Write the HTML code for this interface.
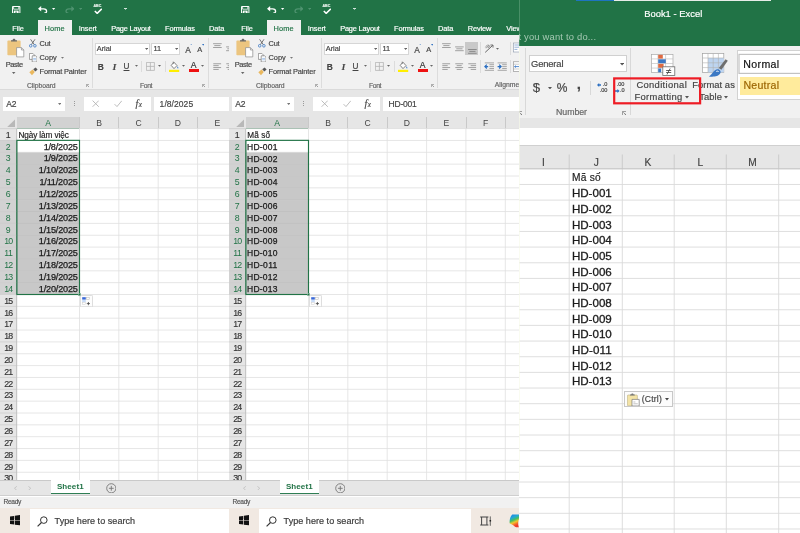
<!DOCTYPE html>
<html lang="vi"><head><meta charset="utf-8"><title>Excel</title>
<style>
html,body{margin:0;padding:0}
body{width:800px;height:533px;position:relative;overflow:hidden;background:#fff;font-family:"Liberation Sans",sans-serif}
.p{position:absolute;top:0;height:533px;overflow:hidden;will-change:transform;opacity:.999}
.r{position:absolute;display:block}
.t{position:absolute;white-space:nowrap;display:block;-webkit-text-stroke:.18px currentColor}
</style></head><body>
<div class="p" style="left:0;width:229px"><div class="r" style="left:0.00px;top:0.00px;width:292.00px;height:35.00px;background:#217346;"></div><div class="r" style="left:0.00px;top:35.00px;width:292.00px;height:54.50px;background:#f1f1f1;"></div><div class="r" style="left:0.00px;top:89.50px;width:292.00px;height:27.30px;background:#e6e6e6;"></div><div class="r" style="left:0.00px;top:89.20px;width:292.00px;height:0.80px;background:#dadada;"></div><svg class="r" style="left:12.20px;top:5.50px;" width="8.4" height="7.8" viewBox="0 0 8.4 7.8"><path d="M.5 .5H7.9V7.3H.5Z" fill="none" stroke="#fff" stroke-width="1"/><path d="M2 .8H6.4V3.4H2Z" fill="#fff" opacity=".0"/><path d="M1.8 4.6H6.6V7.3H1.8Z" fill="#fff"/><rect x="3.4" y="5.6" width="1.3" height="1.2" fill="#217346"/><path d="M1.6 .8V3.2H6.8V.8" fill="none" stroke="#fff" stroke-width=".8"/></svg><svg class="r" style="left:38.00px;top:5.80px;" width="9.6" height="7.6" viewBox="0 0 9.6 7.6"><path d="M1.2 2.8H5.6C7.8 2.8 8.6 4 8.6 5.2C8.6 6.4 7.6 7.2 6.2 7.2" fill="none" stroke="#fff" stroke-width="1.3"/><path d="M0 2.8L3.2 0V5.6Z" fill="#fff"/></svg><svg class="r" style="left:52.38px;top:8.32px;" width="3.23" height="1.95" viewBox="0 0 3.23 1.95"><path d="M0 0H3.23L1.61 1.95Z" fill="#fff"/></svg><svg class="r" style="left:64.60px;top:5.80px;" width="9.6" height="7.6" viewBox="0 0 9.6 7.6"><path d="M8.4 2.8H4C1.8 2.8 1 4 1 5.2C1 6.4 2 7.2 3.4 7.2" fill="none" stroke="#4f9370" stroke-width="1.2"/><path d="M9.6 2.8L6.4 0V5.6Z" fill="#4f9370"/></svg><svg class="r" style="left:78.69px;top:8.32px;" width="3.23" height="1.95" viewBox="0 0 3.23 1.95"><path d="M0 0H3.23L1.61 1.95Z" fill="#4f9370"/></svg><span class="t" style="left:93.50px;top:3.78px;font-size:3.6px;line-height:4.32px;color:#e6f0ea;font-weight:bold;">ABC</span><svg class="r" style="left:93.60px;top:8.00px;" width="8.6" height="6.4" viewBox="0 0 8.6 6.4"><path d="M.8 3L3.2 5.4L7.8 .8" fill="none" stroke="#fff" stroke-width="1.5"/></svg><div class="r" style="left:124.30px;top:7.70px;width:2.40px;height:0.70px;background:#cfe3d8;"></div><svg class="r" style="left:124.51px;top:9.20px;" width="1.98" height="1.2" viewBox="0 0 1.98 1.2"><path d="M0 0H1.98L0.99 1.20Z" fill="#cfe3d8"/></svg><div class="r" style="left:38.00px;top:20.40px;width:33.60px;height:15.00px;background:#f1f1f1;"></div><span class="t" style="left:12.25px;top:24.76px;font-size:7.4px;line-height:8.88px;color:#fff;letter-spacing:-0.106px;">File</span><span class="t" style="left:44.45px;top:24.76px;font-size:7.4px;line-height:8.88px;color:#217346;letter-spacing:0.140px;">Home</span><span class="t" style="left:78.80px;top:24.76px;font-size:7.4px;line-height:8.88px;color:#fff;letter-spacing:-0.085px;">Insert</span><span class="t" style="left:111.20px;top:24.76px;font-size:7.4px;line-height:8.88px;color:#fff;letter-spacing:-0.178px;">Page Layout</span><span class="t" style="left:165.10px;top:24.76px;font-size:7.4px;line-height:8.88px;color:#fff;letter-spacing:-0.130px;">Formulas</span><span class="t" style="left:209.10px;top:24.76px;font-size:7.4px;line-height:8.88px;color:#fff;letter-spacing:-0.108px;">Data</span><span class="t" style="left:238.70px;top:24.76px;font-size:7.4px;line-height:8.88px;color:#fff;letter-spacing:-0.111px;">Review</span><span class="t" style="left:277.25px;top:24.76px;font-size:7.4px;line-height:8.88px;color:#fff;letter-spacing:-0.102px;">View</span><svg class="r" style="left:7.00px;top:38.40px;" width="18" height="19.4" viewBox="0 0 18 19.4"><rect x=".4" y="2.6" width="13.2" height="14.6" rx=".8" fill="#ecc57f"/><path d="M4 3.4V2.2H5.6C5.6 .4 8.4 .4 8.4 2.2H10V3.4Z" fill="#6a6a6a"/><path d="M9.6 9.6H14.4L16.8 12V18.9H9.6Z" fill="#fff" stroke="#8a8a8a" stroke-width=".7"/><path d="M14.4 9.6V12H16.8" fill="none" stroke="#8a8a8a" stroke-width=".7"/></svg><span class="t" style="left:5.70px;top:60.86px;font-size:7.4px;line-height:8.88px;color:#444;letter-spacing:-0.385px;">Paste</span><svg class="r" style="left:12.49px;top:72.37px;" width="3.42" height="2.07" viewBox="0 0 3.42 2.07"><path d="M0 0H3.42L1.71 2.07Z" fill="#666"/></svg><svg class="r" style="left:29.00px;top:39.40px;" width="7.6" height="8.6" viewBox="0 0 7.6 8.6"><path d="M1.6 .3L5.2 5.6M6 .3L2.4 5.6" stroke="#555" stroke-width=".8" fill="none"/><circle cx="1.7" cy="6.8" r="1.3" fill="none" stroke="#3b78c4" stroke-width=".8"/><circle cx="5.9" cy="6.8" r="1.3" fill="none" stroke="#3b78c4" stroke-width=".8"/></svg><span class="t" style="left:39.60px;top:40.06px;font-size:7.4px;line-height:8.88px;color:#444;letter-spacing:-0.305px;">Cut</span><svg class="r" style="left:29.00px;top:52.60px;" width="8.4" height="9.4" viewBox="0 0 8.4 9.4"><path d="M.4 .4H3.8L5.2 1.8V6.4H.4Z" fill="#fff" stroke="#777" stroke-width=".7"/><path d="M3.2 2.8H6.6L8 4.2V9H3.2Z" fill="#fff" stroke="#777" stroke-width=".7"/><path d="M4.2 5.4H7M4.2 6.8H7" stroke="#6ea0dc" stroke-width=".6"/></svg><span class="t" style="left:39.60px;top:53.76px;font-size:7.4px;line-height:8.88px;color:#444;letter-spacing:-0.069px;">Copy</span><svg class="r" style="left:61.08px;top:56.78px;" width="3.04" height="1.84" viewBox="0 0 3.04 1.84"><path d="M0 0H3.04L1.52 1.84Z" fill="#777"/></svg><svg class="r" style="left:29.00px;top:67.00px;" width="9" height="8.6" viewBox="0 0 9 8.6"><path d="M.3 5.2L3.6 2.6L5.8 5L3 8.3Z" fill="#eab85e"/><path d="M4.2 2.2L6.6 .4L8.6 2.6L6.4 4.6Z" fill="#555"/></svg><span class="t" style="left:39.60px;top:68.06px;font-size:7.4px;line-height:8.88px;color:#444;letter-spacing:-0.139px;">Format Painter</span><span class="t" style="left:27.00px;top:81.57px;font-size:6.8px;line-height:8.16px;color:#666;letter-spacing:-0.056px;">Clipboard</span><svg class="r" style="left:85.60px;top:83.60px;" width="3.6" height="3.6" viewBox="0 0 3.6 3.6"><path d="M.4 3.6V.4H3.6" fill="none" stroke="#777" stroke-width="0.6"/><path d="M3.6 3.6H1.62L3.6 1.62Z" fill="#777"/><path d="M1.08 1.08L2.8800000000000003 2.8800000000000003" stroke="#777" stroke-width="0.6"/></svg><div class="r" style="left:92.00px;top:38.00px;width:0.80px;height:50.00px;background:#dcdcdc;"></div><div class="r" style="left:95.20px;top:42.80px;width:55.00px;height:12.00px;background:#fff;box-sizing:border-box;border:1px solid #d6d6d6;"></div><div class="r" style="left:150.80px;top:42.80px;width:29.60px;height:12.00px;background:#fff;box-sizing:border-box;border:1px solid #d6d6d6;"></div><span class="t" style="left:96.80px;top:45.06px;font-size:7.4px;line-height:8.88px;color:#444;letter-spacing:-0.041px;">Arial</span><svg class="r" style="left:145.28px;top:47.92px;" width="3.23" height="1.95" viewBox="0 0 3.23 1.95"><path d="M0 0H3.23L1.61 1.95Z" fill="#666"/></svg><span class="t" style="left:153.60px;top:45.06px;font-size:7.4px;line-height:8.88px;color:#444;letter-spacing:-0.241px;">11</span><svg class="r" style="left:174.78px;top:47.92px;" width="3.23" height="1.95" viewBox="0 0 3.23 1.95"><path d="M0 0H3.23L1.61 1.95Z" fill="#666"/></svg><span class="t" style="left:185.20px;top:44.76px;font-size:8.4px;line-height:10.08px;color:#444;">A</span><svg class="r" style="left:190.40px;top:43.60px;" width="2.4" height="1.8" viewBox="0 0 2.4 1.8"><path d="M0 1.8H2.4L1.2 0Z" fill="#3b78c4"/></svg><span class="t" style="left:197.33px;top:45.66px;font-size:7.4px;line-height:8.88px;color:#444;">A</span><svg class="r" style="left:201.60px;top:44.00px;" width="2.4" height="1.8" viewBox="0 0 2.4 1.8"><path d="M0 0H2.4L1.2 1.8Z" fill="#3b78c4"/></svg><span class="t" style="left:97.87px;top:61.76px;font-size:8.4px;line-height:10.08px;color:#444;font-weight:bold;">B</span><span class="t" style="left:112.68px;top:61.56px;font-size:8.8px;line-height:10.56px;color:#444;font-style:italic;font-family:'Liberation Serif',serif;font-weight:bold;">I</span><span class="t" style="left:123.54px;top:61.66px;font-size:8.2px;line-height:9.84px;color:#444;text-decoration:underline;text-underline-offset:.6px;">U</span><svg class="r" style="left:134.68px;top:65.48px;" width="3.04" height="1.84" viewBox="0 0 3.04 1.84"><path d="M0 0H3.04L1.52 1.84Z" fill="#666"/></svg><div class="r" style="left:141.20px;top:60.60px;width:0.80px;height:11.40px;background:#dcdcdc;"></div><svg class="r" style="left:146.00px;top:62.00px;" width="8.8" height="8.8" viewBox="0 0 8.8 8.8"><path d="M.4 .4H8.4V8.4H.4ZM4.4 .4V8.4M.4 4.4H8.4" fill="none" stroke="#b2b2b2" stroke-width=".8"/></svg><svg class="r" style="left:158.48px;top:65.48px;" width="3.04" height="1.84" viewBox="0 0 3.04 1.84"><path d="M0 0H3.04L1.52 1.84Z" fill="#666"/></svg><div class="r" style="left:165.00px;top:60.60px;width:0.80px;height:11.40px;background:#dcdcdc;"></div><svg class="r" style="left:169.00px;top:60.60px;" width="10.6" height="11" viewBox="0 0 10.6 11"><path d="M2.2 4.4L5 1.2L8 4.6L5 7.6Z" fill="#fff" stroke="#666" stroke-width=".8"/><path d="M4.2 .6V3" stroke="#666" stroke-width=".7"/><path d="M8.6 5.2C9.4 6.4 9.8 7 9 7.6C8.2 7 8 6.2 8.6 5.2Z" fill="#3b78c4"/><rect x="0" y="8.8" width="10.2" height="2.2" fill="#ffee00"/></svg><svg class="r" style="left:182.18px;top:65.48px;" width="3.04" height="1.84" viewBox="0 0 3.04 1.84"><path d="M0 0H3.04L1.52 1.84Z" fill="#666"/></svg><span class="t" style="left:190.83px;top:60.06px;font-size:8.6px;line-height:10.32px;color:#333;">A</span><div class="r" style="left:188.60px;top:69.40px;width:10.20px;height:2.20px;background:#ee1111;"></div><svg class="r" style="left:201.48px;top:65.48px;" width="3.04" height="1.84" viewBox="0 0 3.04 1.84"><path d="M0 0H3.04L1.52 1.84Z" fill="#666"/></svg><span class="t" style="left:140.00px;top:81.57px;font-size:6.8px;line-height:8.16px;color:#666;letter-spacing:-0.402px;">Font</span><svg class="r" style="left:201.80px;top:83.60px;" width="3.6" height="3.6" viewBox="0 0 3.6 3.6"><path d="M.4 3.6V.4H3.6" fill="none" stroke="#777" stroke-width="0.6"/><path d="M3.6 3.6H1.62L3.6 1.62Z" fill="#777"/><path d="M1.08 1.08L2.8800000000000003 2.8800000000000003" stroke="#777" stroke-width="0.6"/></svg><div class="r" style="left:208.40px;top:38.00px;width:0.80px;height:50.00px;background:#dcdcdc;"></div><div class="r" style="left:236.30px;top:42.20px;width:13.10px;height:12.60px;background:#c9c9c9;"></div><svg class="r" style="left:212.00px;top:41.00px;" width="80" height="16" viewBox="0 0 80 16"><path d="M1.10 2.70h8.6 M2.30 4.60h6.2 M1.10 6.50h8.6" stroke="#858585" stroke-width="0.75" fill="none"/><path d="M14.10 5.90h8.6 M15.30 7.80h6.2 M14.10 9.70h8.6" stroke="#858585" stroke-width="0.75" fill="none"/><path d="M27.10 8.50h8.6 M28.30 10.40h6.2 M27.10 12.30h8.6" stroke="#777" stroke-width="0.75" fill="none"/><path d="M44.2 11.4L51.6 4.4" stroke="#555" stroke-width=".9" fill="none"/><path d="M49.4 4H52V6.6" stroke="#555" stroke-width=".8" fill="none"/><path d="M44.6 5.4C45.4 4.2 46.8 5 46 6.2C45.6 7 44.6 7.2 44.4 6.6M47 3.4V6.6M47 5C47.6 4 49 4.4 48.6 5.6C48.2 6.6 47.4 6.6 47 6" stroke="#666" stroke-width=".6" fill="none"/><rect x="72.4" y="2" width="7" height="9" fill="#fff" stroke="#8a97aa" stroke-width=".6"/><path d="M73.4 4H78.4M73.4 6.2H78.4M73.4 8.4H76.4" stroke="#6f94cc" stroke-width=".7"/></svg><svg class="r" style="left:267.08px;top:47.68px;" width="3.04" height="1.84" viewBox="0 0 3.04 1.84"><path d="M0 0H3.04L1.52 1.84Z" fill="#666"/></svg><div class="r" style="left:251.20px;top:42.00px;width:0.80px;height:12.60px;background:#dcdcdc;"></div><div class="r" style="left:251.20px;top:60.40px;width:0.80px;height:12.60px;background:#dcdcdc;"></div><div class="r" style="left:281.40px;top:42.00px;width:0.80px;height:12.60px;background:#dcdcdc;"></div><div class="r" style="left:281.40px;top:60.40px;width:0.80px;height:12.60px;background:#dcdcdc;"></div><svg class="r" style="left:212.00px;top:60.00px;" width="80" height="14" viewBox="0 0 80 14"><path d="M1.30 3.75h7.8 M1.30 5.65h5.4 M1.30 7.55h7.8 M1.30 9.45h5.4" stroke="#858585" stroke-width="0.75" fill="none"/><path d="M14.30 3.75h7.8 M15.70 5.65h5 M14.30 7.55h7.8 M15.70 9.45h5" stroke="#858585" stroke-width="0.75" fill="none"/><path d="M27.30 3.75h7.8 M29.70 5.65h5.4 M27.30 7.55h7.8 M29.70 9.45h5.4" stroke="#858585" stroke-width="0.75" fill="none"/><path d="M43.80 2.9h9.2M43.80 10.3h9.2M48.40 4.7h4.6M48.40 6.6h4.6M48.40 8.5h4.6" stroke="#858585" stroke-width=".7" fill="none"/><path d="M47.20 6.6H44.20M45.80 4.7L43.90 6.6L45.80 8.5" stroke="#2b6fc2" stroke-width="1.2" fill="none"/><path d="M56.60 2.9h9.2M56.60 10.3h9.2M61.20 4.7h4.6M61.20 6.6h4.6M61.20 8.5h4.6" stroke="#858585" stroke-width=".7" fill="none"/><path d="M56.60 6.6H59.80M58.20 4.7L60.10 6.6L58.20 8.5" stroke="#2b6fc2" stroke-width="1.2" fill="none"/><rect x="72.4" y="1.8" width="7" height="9.6" fill="#fff" stroke="#888" stroke-width=".6"/><path d="M72.4 4.2H79.4M72.4 9H79.4" stroke="#999" stroke-width=".5"/><path d="M73.6 6.6H78.4M74.8 5.6L73.6 6.6L74.8 7.6" stroke="#2b6fc2" stroke-width=".8" fill="none"/></svg><span class="t" style="left:265.80px;top:81.17px;font-size:6.8px;line-height:8.16px;color:#666;letter-spacing:-0.027px;">Alignment</span><div class="r" style="left:3.00px;top:96.80px;width:62.30px;height:14.00px;background:#fff;"></div><span class="t" style="left:6.20px;top:99.21px;font-size:8.5px;line-height:10.2px;color:#444;letter-spacing:-0.099px;">A2</span><svg class="r" style="left:57.89px;top:102.97px;" width="3.42" height="2.07" viewBox="0 0 3.42 2.07"><path d="M0 0H3.42L1.71 2.07Z" fill="#777"/></svg><div class="r" style="left:74.40px;top:100.60px;width:0.90px;height:0.90px;background:#9a9a9a;"></div><div class="r" style="left:74.40px;top:102.90px;width:0.90px;height:0.90px;background:#9a9a9a;"></div><div class="r" style="left:74.40px;top:105.20px;width:0.90px;height:0.90px;background:#9a9a9a;"></div><div class="r" style="left:84.40px;top:96.80px;width:66.60px;height:14.00px;background:#fff;"></div><svg class="r" style="left:91.50px;top:100.30px;" width="7.4" height="7.4" viewBox="0 0 7.4 7.4"><path d="M.6 .6L6.8 6.8M6.8 .6L.6 6.8" stroke="#b4b4b4" stroke-width=".9" fill="none"/></svg><svg class="r" style="left:113.50px;top:100.30px;" width="8.4" height="7.4" viewBox="0 0 8.4 7.4"><path d="M.6 4.2L3 6.6L7.8 .8" stroke="#b4b4b4" stroke-width=".9" fill="none"/></svg><span class="t" style="left:135.40px;top:98.15px;font-size:10px;line-height:12.0px;color:#4a4a4a;font-style:italic;font-family:'Liberation Serif',serif;">f</span><span class="t" style="left:138.80px;top:101.26px;font-size:7.2px;line-height:8.64px;color:#4a4a4a;font-style:italic;font-family:'Liberation Serif',serif;">x</span><div class="r" style="left:153.50px;top:96.80px;width:138.50px;height:14.00px;background:#fff;"></div><span class="t" style="left:159.60px;top:99.21px;font-size:8.5px;line-height:10.2px;color:#444;letter-spacing:0.064px;">1/8/2025</span><div class="r" style="left:0.00px;top:116.80px;width:292.00px;height:11.80px;background:#e6e6e6;"></div><div class="r" style="left:16.70px;top:116.80px;width:62.80px;height:11.80px;background:#d2d2d2;"></div><div class="r" style="left:16.70px;top:127.70px;width:63.10px;height:1.20px;background:#217346;"></div><svg class="r" style="left:6.60px;top:119.30px;" width="8.6" height="8.2" viewBox="0 0 8.6 8.2"><path d="M8.6 0V8.2H0Z" fill="#b8b8b8"/></svg><span class="t" style="left:45.23px;top:117.96px;font-size:8.6px;line-height:10.32px;color:#217346;-webkit-text-stroke:0;">A</span><span class="t" style="left:96.28px;top:117.96px;font-size:8.6px;line-height:10.32px;color:#444;-webkit-text-stroke:0;">B</span><div class="r" style="left:79.10px;top:117.40px;width:0.80px;height:11.20px;background:#c9c9c9;"></div><span class="t" style="left:135.39px;top:117.96px;font-size:8.6px;line-height:10.32px;color:#444;-webkit-text-stroke:0;">C</span><div class="r" style="left:118.40px;top:117.40px;width:0.80px;height:11.20px;background:#c9c9c9;"></div><span class="t" style="left:174.79px;top:117.96px;font-size:8.6px;line-height:10.32px;color:#444;-webkit-text-stroke:0;">D</span><div class="r" style="left:157.80px;top:117.40px;width:0.80px;height:11.20px;background:#c9c9c9;"></div><span class="t" style="left:214.38px;top:117.96px;font-size:8.6px;line-height:10.32px;color:#444;-webkit-text-stroke:0;">E</span><div class="r" style="left:197.20px;top:117.40px;width:0.80px;height:11.20px;background:#c9c9c9;"></div><span class="t" style="left:253.97px;top:117.96px;font-size:8.6px;line-height:10.32px;color:#444;-webkit-text-stroke:0;">F</span><div class="r" style="left:236.50px;top:117.40px;width:0.80px;height:11.20px;background:#c9c9c9;"></div><span class="t" style="left:292.61px;top:117.96px;font-size:8.6px;line-height:10.32px;color:#444;-webkit-text-stroke:0;">G</span><div class="r" style="left:275.90px;top:117.40px;width:0.80px;height:11.20px;background:#c9c9c9;"></div><div class="r" style="left:0.00px;top:128.60px;width:16.70px;height:351.70px;background:#e6e6e6;"></div><div class="r" style="left:0.00px;top:140.45px;width:16.70px;height:154.05px;background:#d2d2d2;"></div><div class="r" style="left:16.20px;top:140.45px;width:0.50px;height:154.05px;background:#217346;"></div><div class="r" style="left:16.70px;top:152.30px;width:62.80px;height:142.20px;background:#c8c8c8;"></div><svg class="r" style="left:0;top:0" width="292" height="482" viewBox="0 0 292 482"><line x1="16.7" x2="292" y1="128.60" y2="128.60" stroke="#dfdfdf" stroke-width=".8"/><line x1="0" x2="16.7" y1="128.60" y2="128.60" stroke="#cdcdcd" stroke-width=".8"/><line x1="16.7" x2="292" y1="140.45" y2="140.45" stroke="#dfdfdf" stroke-width=".8"/><line x1="0" x2="16.7" y1="140.45" y2="140.45" stroke="#cdcdcd" stroke-width=".8"/><line x1="16.7" x2="292" y1="152.30" y2="152.30" stroke="#dfdfdf" stroke-width=".8"/><line x1="0" x2="16.7" y1="152.30" y2="152.30" stroke="#cdcdcd" stroke-width=".8"/><line x1="16.7" x2="292" y1="164.15" y2="164.15" stroke="#dfdfdf" stroke-width=".8"/><line x1="0" x2="16.7" y1="164.15" y2="164.15" stroke="#cdcdcd" stroke-width=".8"/><line x1="16.7" x2="292" y1="176.00" y2="176.00" stroke="#dfdfdf" stroke-width=".8"/><line x1="0" x2="16.7" y1="176.00" y2="176.00" stroke="#cdcdcd" stroke-width=".8"/><line x1="16.7" x2="292" y1="187.85" y2="187.85" stroke="#dfdfdf" stroke-width=".8"/><line x1="0" x2="16.7" y1="187.85" y2="187.85" stroke="#cdcdcd" stroke-width=".8"/><line x1="16.7" x2="292" y1="199.70" y2="199.70" stroke="#dfdfdf" stroke-width=".8"/><line x1="0" x2="16.7" y1="199.70" y2="199.70" stroke="#cdcdcd" stroke-width=".8"/><line x1="16.7" x2="292" y1="211.55" y2="211.55" stroke="#dfdfdf" stroke-width=".8"/><line x1="0" x2="16.7" y1="211.55" y2="211.55" stroke="#cdcdcd" stroke-width=".8"/><line x1="16.7" x2="292" y1="223.40" y2="223.40" stroke="#dfdfdf" stroke-width=".8"/><line x1="0" x2="16.7" y1="223.40" y2="223.40" stroke="#cdcdcd" stroke-width=".8"/><line x1="16.7" x2="292" y1="235.25" y2="235.25" stroke="#dfdfdf" stroke-width=".8"/><line x1="0" x2="16.7" y1="235.25" y2="235.25" stroke="#cdcdcd" stroke-width=".8"/><line x1="16.7" x2="292" y1="247.10" y2="247.10" stroke="#dfdfdf" stroke-width=".8"/><line x1="0" x2="16.7" y1="247.10" y2="247.10" stroke="#cdcdcd" stroke-width=".8"/><line x1="16.7" x2="292" y1="258.95" y2="258.95" stroke="#dfdfdf" stroke-width=".8"/><line x1="0" x2="16.7" y1="258.95" y2="258.95" stroke="#cdcdcd" stroke-width=".8"/><line x1="16.7" x2="292" y1="270.80" y2="270.80" stroke="#dfdfdf" stroke-width=".8"/><line x1="0" x2="16.7" y1="270.80" y2="270.80" stroke="#cdcdcd" stroke-width=".8"/><line x1="16.7" x2="292" y1="282.65" y2="282.65" stroke="#dfdfdf" stroke-width=".8"/><line x1="0" x2="16.7" y1="282.65" y2="282.65" stroke="#cdcdcd" stroke-width=".8"/><line x1="16.7" x2="292" y1="294.50" y2="294.50" stroke="#dfdfdf" stroke-width=".8"/><line x1="0" x2="16.7" y1="294.50" y2="294.50" stroke="#cdcdcd" stroke-width=".8"/><line x1="16.7" x2="292" y1="306.35" y2="306.35" stroke="#dfdfdf" stroke-width=".8"/><line x1="0" x2="16.7" y1="306.35" y2="306.35" stroke="#cdcdcd" stroke-width=".8"/><line x1="16.7" x2="292" y1="318.20" y2="318.20" stroke="#dfdfdf" stroke-width=".8"/><line x1="0" x2="16.7" y1="318.20" y2="318.20" stroke="#cdcdcd" stroke-width=".8"/><line x1="16.7" x2="292" y1="330.05" y2="330.05" stroke="#dfdfdf" stroke-width=".8"/><line x1="0" x2="16.7" y1="330.05" y2="330.05" stroke="#cdcdcd" stroke-width=".8"/><line x1="16.7" x2="292" y1="341.90" y2="341.90" stroke="#dfdfdf" stroke-width=".8"/><line x1="0" x2="16.7" y1="341.90" y2="341.90" stroke="#cdcdcd" stroke-width=".8"/><line x1="16.7" x2="292" y1="353.75" y2="353.75" stroke="#dfdfdf" stroke-width=".8"/><line x1="0" x2="16.7" y1="353.75" y2="353.75" stroke="#cdcdcd" stroke-width=".8"/><line x1="16.7" x2="292" y1="365.60" y2="365.60" stroke="#dfdfdf" stroke-width=".8"/><line x1="0" x2="16.7" y1="365.60" y2="365.60" stroke="#cdcdcd" stroke-width=".8"/><line x1="16.7" x2="292" y1="377.45" y2="377.45" stroke="#dfdfdf" stroke-width=".8"/><line x1="0" x2="16.7" y1="377.45" y2="377.45" stroke="#cdcdcd" stroke-width=".8"/><line x1="16.7" x2="292" y1="389.30" y2="389.30" stroke="#dfdfdf" stroke-width=".8"/><line x1="0" x2="16.7" y1="389.30" y2="389.30" stroke="#cdcdcd" stroke-width=".8"/><line x1="16.7" x2="292" y1="401.15" y2="401.15" stroke="#dfdfdf" stroke-width=".8"/><line x1="0" x2="16.7" y1="401.15" y2="401.15" stroke="#cdcdcd" stroke-width=".8"/><line x1="16.7" x2="292" y1="413.00" y2="413.00" stroke="#dfdfdf" stroke-width=".8"/><line x1="0" x2="16.7" y1="413.00" y2="413.00" stroke="#cdcdcd" stroke-width=".8"/><line x1="16.7" x2="292" y1="424.85" y2="424.85" stroke="#dfdfdf" stroke-width=".8"/><line x1="0" x2="16.7" y1="424.85" y2="424.85" stroke="#cdcdcd" stroke-width=".8"/><line x1="16.7" x2="292" y1="436.70" y2="436.70" stroke="#dfdfdf" stroke-width=".8"/><line x1="0" x2="16.7" y1="436.70" y2="436.70" stroke="#cdcdcd" stroke-width=".8"/><line x1="16.7" x2="292" y1="448.55" y2="448.55" stroke="#dfdfdf" stroke-width=".8"/><line x1="0" x2="16.7" y1="448.55" y2="448.55" stroke="#cdcdcd" stroke-width=".8"/><line x1="16.7" x2="292" y1="460.40" y2="460.40" stroke="#dfdfdf" stroke-width=".8"/><line x1="0" x2="16.7" y1="460.40" y2="460.40" stroke="#cdcdcd" stroke-width=".8"/><line x1="16.7" x2="292" y1="472.25" y2="472.25" stroke="#dfdfdf" stroke-width=".8"/><line x1="0" x2="16.7" y1="472.25" y2="472.25" stroke="#cdcdcd" stroke-width=".8"/><line x1="16.7" x2="292" y1="484.10" y2="484.10" stroke="#dfdfdf" stroke-width=".8"/><line x1="0" x2="16.7" y1="484.10" y2="484.10" stroke="#cdcdcd" stroke-width=".8"/><line x1="16.7" x2="79.5" y1="164.15" y2="164.15" stroke="#b9b9b9" stroke-width=".8"/><line x1="16.7" x2="79.5" y1="176.00" y2="176.00" stroke="#b9b9b9" stroke-width=".8"/><line x1="16.7" x2="79.5" y1="187.85" y2="187.85" stroke="#b9b9b9" stroke-width=".8"/><line x1="16.7" x2="79.5" y1="199.70" y2="199.70" stroke="#b9b9b9" stroke-width=".8"/><line x1="16.7" x2="79.5" y1="211.55" y2="211.55" stroke="#b9b9b9" stroke-width=".8"/><line x1="16.7" x2="79.5" y1="223.40" y2="223.40" stroke="#b9b9b9" stroke-width=".8"/><line x1="16.7" x2="79.5" y1="235.25" y2="235.25" stroke="#b9b9b9" stroke-width=".8"/><line x1="16.7" x2="79.5" y1="247.10" y2="247.10" stroke="#b9b9b9" stroke-width=".8"/><line x1="16.7" x2="79.5" y1="258.95" y2="258.95" stroke="#b9b9b9" stroke-width=".8"/><line x1="16.7" x2="79.5" y1="270.80" y2="270.80" stroke="#b9b9b9" stroke-width=".8"/><line x1="16.7" x2="79.5" y1="282.65" y2="282.65" stroke="#b9b9b9" stroke-width=".8"/><line x1="79.5" x2="79.5" y1="128.6" y2="480.3" stroke="#dfdfdf" stroke-width=".8"/><line x1="118.8" x2="118.8" y1="128.6" y2="480.3" stroke="#dfdfdf" stroke-width=".8"/><line x1="158.2" x2="158.2" y1="128.6" y2="480.3" stroke="#dfdfdf" stroke-width=".8"/><line x1="197.6" x2="197.6" y1="128.6" y2="480.3" stroke="#dfdfdf" stroke-width=".8"/><line x1="236.9" x2="236.9" y1="128.6" y2="480.3" stroke="#dfdfdf" stroke-width=".8"/><line x1="276.3" x2="276.3" y1="128.6" y2="480.3" stroke="#dfdfdf" stroke-width=".8"/><line x1="315.6" x2="315.6" y1="128.6" y2="480.3" stroke="#dfdfdf" stroke-width=".8"/><line x1="16.7" x2="16.7" y1="128.6" y2="480.3" stroke="#bcbcbc" stroke-width=".9"/><rect x="16.9" y="140.35" width="62.60" height="154.15" fill="none" stroke="#217346" stroke-width="1.15"/><rect x="78.2" y="293.20" width="2.6" height="2.6" fill="#217346" stroke="#fff" stroke-width=".3"/></svg><span class="t" style="left:5.85px;top:129.78px;font-size:8.8px;line-height:10.56px;color:#333;-webkit-text-stroke:.15px #333;">1</span><span class="t" style="left:5.85px;top:141.63px;font-size:8.8px;line-height:10.56px;color:#217346;-webkit-text-stroke:0;">2</span><span class="t" style="left:5.85px;top:153.48px;font-size:8.8px;line-height:10.56px;color:#217346;-webkit-text-stroke:0;">3</span><span class="t" style="left:5.85px;top:165.33px;font-size:8.8px;line-height:10.56px;color:#217346;-webkit-text-stroke:0;">4</span><span class="t" style="left:5.85px;top:177.18px;font-size:8.8px;line-height:10.56px;color:#217346;-webkit-text-stroke:0;">5</span><span class="t" style="left:5.85px;top:189.03px;font-size:8.8px;line-height:10.56px;color:#217346;-webkit-text-stroke:0;">6</span><span class="t" style="left:5.85px;top:200.88px;font-size:8.8px;line-height:10.56px;color:#217346;-webkit-text-stroke:0;">7</span><span class="t" style="left:5.85px;top:212.73px;font-size:8.8px;line-height:10.56px;color:#217346;-webkit-text-stroke:0;">8</span><span class="t" style="left:5.85px;top:224.58px;font-size:8.8px;line-height:10.56px;color:#217346;-webkit-text-stroke:0;">9</span><span class="t" style="left:4.30px;top:236.43px;font-size:8.8px;line-height:10.56px;color:#217346;letter-spacing:-0.894px;-webkit-text-stroke:0;">10</span><span class="t" style="left:4.30px;top:248.28px;font-size:8.8px;line-height:10.56px;color:#217346;letter-spacing:-0.568px;-webkit-text-stroke:0;">11</span><span class="t" style="left:4.30px;top:260.13px;font-size:8.8px;line-height:10.56px;color:#217346;letter-spacing:-0.894px;-webkit-text-stroke:0;">12</span><span class="t" style="left:4.30px;top:271.98px;font-size:8.8px;line-height:10.56px;color:#217346;letter-spacing:-0.894px;-webkit-text-stroke:0;">13</span><span class="t" style="left:4.30px;top:283.83px;font-size:8.8px;line-height:10.56px;color:#217346;letter-spacing:-0.894px;-webkit-text-stroke:0;">14</span><span class="t" style="left:4.30px;top:295.68px;font-size:8.8px;line-height:10.56px;color:#333;letter-spacing:-0.894px;-webkit-text-stroke:.15px #333;">15</span><span class="t" style="left:4.30px;top:307.53px;font-size:8.8px;line-height:10.56px;color:#333;letter-spacing:-0.894px;-webkit-text-stroke:.15px #333;">16</span><span class="t" style="left:4.30px;top:319.38px;font-size:8.8px;line-height:10.56px;color:#333;letter-spacing:-0.894px;-webkit-text-stroke:.15px #333;">17</span><span class="t" style="left:4.30px;top:331.23px;font-size:8.8px;line-height:10.56px;color:#333;letter-spacing:-0.894px;-webkit-text-stroke:.15px #333;">18</span><span class="t" style="left:4.30px;top:343.08px;font-size:8.8px;line-height:10.56px;color:#333;letter-spacing:-0.894px;-webkit-text-stroke:.15px #333;">19</span><span class="t" style="left:4.30px;top:354.93px;font-size:8.8px;line-height:10.56px;color:#333;letter-spacing:-0.894px;-webkit-text-stroke:.15px #333;">20</span><span class="t" style="left:4.30px;top:366.78px;font-size:8.8px;line-height:10.56px;color:#333;letter-spacing:-0.894px;-webkit-text-stroke:.15px #333;">21</span><span class="t" style="left:4.30px;top:378.63px;font-size:8.8px;line-height:10.56px;color:#333;letter-spacing:-0.894px;-webkit-text-stroke:.15px #333;">22</span><span class="t" style="left:4.30px;top:390.48px;font-size:8.8px;line-height:10.56px;color:#333;letter-spacing:-0.894px;-webkit-text-stroke:.15px #333;">23</span><span class="t" style="left:4.30px;top:402.33px;font-size:8.8px;line-height:10.56px;color:#333;letter-spacing:-0.894px;-webkit-text-stroke:.15px #333;">24</span><span class="t" style="left:4.30px;top:414.18px;font-size:8.8px;line-height:10.56px;color:#333;letter-spacing:-0.894px;-webkit-text-stroke:.15px #333;">25</span><span class="t" style="left:4.30px;top:426.03px;font-size:8.8px;line-height:10.56px;color:#333;letter-spacing:-0.894px;-webkit-text-stroke:.15px #333;">26</span><span class="t" style="left:4.30px;top:437.88px;font-size:8.8px;line-height:10.56px;color:#333;letter-spacing:-0.894px;-webkit-text-stroke:.15px #333;">27</span><span class="t" style="left:4.30px;top:449.73px;font-size:8.8px;line-height:10.56px;color:#333;letter-spacing:-0.894px;-webkit-text-stroke:.15px #333;">28</span><span class="t" style="left:4.30px;top:461.58px;font-size:8.8px;line-height:10.56px;color:#333;letter-spacing:-0.894px;-webkit-text-stroke:.15px #333;">29</span><span class="t" style="left:4.30px;top:473.43px;font-size:8.8px;line-height:10.56px;color:#333;letter-spacing:-0.894px;-webkit-text-stroke:.15px #333;">30</span><span class="t" style="left:18.40px;top:130.78px;font-size:8.2px;line-height:9.84px;color:#222;letter-spacing:-0.084px;">Ngày làm việc</span><span class="t" style="left:43.64px;top:141.58px;font-size:9.1px;line-height:10.92px;color:#1a1a1a;letter-spacing:-0.170px;-webkit-text-stroke:.25px #1a1a1a;">1/8/2025</span><span class="t" style="left:43.64px;top:153.43px;font-size:9.1px;line-height:10.92px;color:#1a1a1a;letter-spacing:-0.170px;-webkit-text-stroke:.25px #1a1a1a;">1/9/2025</span><span class="t" style="left:38.75px;top:165.28px;font-size:9.1px;line-height:10.92px;color:#1a1a1a;letter-spacing:-0.170px;-webkit-text-stroke:.25px #1a1a1a;">1/10/2025</span><span class="t" style="left:39.42px;top:177.13px;font-size:9.1px;line-height:10.92px;color:#1a1a1a;letter-spacing:-0.170px;-webkit-text-stroke:.25px #1a1a1a;">1/11/2025</span><span class="t" style="left:38.75px;top:188.98px;font-size:9.1px;line-height:10.92px;color:#1a1a1a;letter-spacing:-0.170px;-webkit-text-stroke:.25px #1a1a1a;">1/12/2025</span><span class="t" style="left:38.75px;top:200.83px;font-size:9.1px;line-height:10.92px;color:#1a1a1a;letter-spacing:-0.170px;-webkit-text-stroke:.25px #1a1a1a;">1/13/2025</span><span class="t" style="left:38.75px;top:212.68px;font-size:9.1px;line-height:10.92px;color:#1a1a1a;letter-spacing:-0.170px;-webkit-text-stroke:.25px #1a1a1a;">1/14/2025</span><span class="t" style="left:38.75px;top:224.53px;font-size:9.1px;line-height:10.92px;color:#1a1a1a;letter-spacing:-0.170px;-webkit-text-stroke:.25px #1a1a1a;">1/15/2025</span><span class="t" style="left:38.75px;top:236.38px;font-size:9.1px;line-height:10.92px;color:#1a1a1a;letter-spacing:-0.170px;-webkit-text-stroke:.25px #1a1a1a;">1/16/2025</span><span class="t" style="left:38.75px;top:248.23px;font-size:9.1px;line-height:10.92px;color:#1a1a1a;letter-spacing:-0.170px;-webkit-text-stroke:.25px #1a1a1a;">1/17/2025</span><span class="t" style="left:38.75px;top:260.08px;font-size:9.1px;line-height:10.92px;color:#1a1a1a;letter-spacing:-0.170px;-webkit-text-stroke:.25px #1a1a1a;">1/18/2025</span><span class="t" style="left:38.75px;top:271.93px;font-size:9.1px;line-height:10.92px;color:#1a1a1a;letter-spacing:-0.170px;-webkit-text-stroke:.25px #1a1a1a;">1/19/2025</span><span class="t" style="left:38.75px;top:283.78px;font-size:9.1px;line-height:10.92px;color:#1a1a1a;letter-spacing:-0.170px;-webkit-text-stroke:.25px #1a1a1a;">1/20/2025</span><svg class="r" style="left:80.00px;top:295.10px;" width="13" height="12.2" viewBox="0 0 13 12.2"><rect x=".4" y=".4" width="12.2" height="11.4" rx=".9" fill="#fdfdfd" stroke="#cdcdcd" stroke-width=".7"/><rect x="2.2" y="2.2" width="3.6" height="2.4" fill="#3868d8"/><rect x="6.3" y="2.3" width="2.9" height="2.2" fill="#fff" stroke="#b5b5b5" stroke-width=".5"/><rect x="2.2" y="5" width="3.6" height="2.1" fill="#c9dcf8"/><rect x="2.4" y="7.7" width="3.2" height="1.8" fill="#fff" stroke="#c4c4c4" stroke-width=".4"/><path d="M6.8 8.6H10M8.4 7V10.2" stroke="#444" stroke-width=".8"/></svg><div class="r" style="left:0.00px;top:480.30px;width:292.00px;height:15.20px;background:#e6e6e6;"></div><div class="r" style="left:0.00px;top:480.00px;width:292.00px;height:0.80px;background:#c9c9c9;"></div><div class="r" style="left:0.00px;top:495.20px;width:292.00px;height:1.30px;background:#cfcfcf;"></div><div class="r" style="left:51.00px;top:480.30px;width:38.80px;height:13.40px;background:#fff;"></div><div class="r" style="left:51.00px;top:493.30px;width:38.80px;height:1.10px;background:#2f7e54;"></div><span class="t" style="left:56.90px;top:482.36px;font-size:8px;line-height:9.6px;color:#217346;letter-spacing:0.094px;font-weight:bold;-webkit-text-stroke:0;">Sheet1</span><svg class="r" style="left:13.60px;top:485.70px;" width="3.2" height="4.6" viewBox="0 0 3.2 4.6"><path d="M2.8 .3L.5 2.3L2.8 4.3" fill="none" stroke="#c2c2c2" stroke-width=".9"/></svg><svg class="r" style="left:27.60px;top:485.70px;" width="3.2" height="4.6" viewBox="0 0 3.2 4.6"><path d="M.4 .3L2.7 2.3L.4 4.3" fill="none" stroke="#c2c2c2" stroke-width=".9"/></svg><svg class="r" style="left:105.80px;top:482.80px;" width="10.6" height="10.6" viewBox="0 0 10.6 10.6"><circle cx="5.3" cy="5.3" r="4.6" fill="none" stroke="#777" stroke-width=".9"/><path d="M2.9 5.3H7.7M5.3 2.9V7.7" stroke="#777" stroke-width=".9"/></svg><div class="r" style="left:0.00px;top:496.50px;width:292.00px;height:12.00px;background:#f1f1f1;"></div><span class="t" style="left:3.60px;top:497.97px;font-size:6.6px;line-height:7.92px;color:#555;letter-spacing:-0.336px;">Ready</span><div class="r" style="left:0.00px;top:508.30px;width:292.00px;height:25.00px;background:#f1e9e2;"></div><div class="r" style="left:30.00px;top:509.00px;width:211.60px;height:24.00px;background:#fff;"></div><svg class="r" style="left:9.80px;top:515.40px;" width="10.4" height="10.4" viewBox="0 0 10.4 10.4"><path d="M0 1.5L4.2 .9V4.9H0ZM4.9 .8L10.4 0V4.9H4.9ZM0 5.6H4.2V9.6L0 9ZM4.9 5.6H10.4V10.4L4.9 9.7Z" fill="#111"/></svg><svg class="r" style="left:37.00px;top:515.60px;" width="11" height="11" viewBox="0 0 11 11"><circle cx="6.8" cy="4.1" r="3.3" fill="none" stroke="#333" stroke-width="1"/><path d="M4.5 6.5L.6 10.4" stroke="#333" stroke-width="1.1"/></svg><span class="t" style="left:54.60px;top:516.25px;font-size:9px;line-height:10.8px;color:#3a3a3a;letter-spacing:0.050px;">Type here to search</span><svg class="r" style="left:251.20px;top:516.00px;" width="12" height="10.2" viewBox="0 0 12 10.2"><path d="M.2 1H8.4M.2 9H8.4" stroke="#444" stroke-width="1.2"/><path d="M1.6 1V9M6.9 1V9" stroke="#444" stroke-width="1"/><path d="M10.3 .4V9.8" stroke="#555" stroke-width=".9"/><rect x="9.6" y="4" width="1.5" height="1.5" fill="#222"/></svg><svg class="r" style="left:280.40px;top:514.00px;" width="14" height="14" viewBox="0 0 14 14"><defs><linearGradient id="cg" x1="0" y1="0" x2=".35" y2="1"><stop offset="0" stop-color="#1b7fe6"/><stop offset=".32" stop-color="#22a6d8"/><stop offset=".52" stop-color="#46bf62"/><stop offset=".7" stop-color="#f0c62e"/><stop offset=".88" stop-color="#f5632c"/><stop offset="1" stop-color="#ee3b2b"/></linearGradient></defs><path d="M3.2 .4H10.5V4.4C9 6.5 8.6 9.6 9.8 13.2H7.2C5.6 12.8 4.6 11.4 3.4 10.8L.6 9.2C.4 5.8 1.2 2.4 3.2 .4Z" fill="url(#cg)"/></svg></div>
<div class="p" style="left:228.9px;width:290.1px"><div class="r" style="left:0.00px;top:0.00px;width:292.00px;height:35.00px;background:#217346;"></div><div class="r" style="left:0.00px;top:35.00px;width:292.00px;height:54.50px;background:#f1f1f1;"></div><div class="r" style="left:0.00px;top:89.50px;width:292.00px;height:27.30px;background:#e6e6e6;"></div><div class="r" style="left:0.00px;top:89.20px;width:292.00px;height:0.80px;background:#dadada;"></div><svg class="r" style="left:12.20px;top:5.50px;" width="8.4" height="7.8" viewBox="0 0 8.4 7.8"><path d="M.5 .5H7.9V7.3H.5Z" fill="none" stroke="#fff" stroke-width="1"/><path d="M2 .8H6.4V3.4H2Z" fill="#fff" opacity=".0"/><path d="M1.8 4.6H6.6V7.3H1.8Z" fill="#fff"/><rect x="3.4" y="5.6" width="1.3" height="1.2" fill="#217346"/><path d="M1.6 .8V3.2H6.8V.8" fill="none" stroke="#fff" stroke-width=".8"/></svg><svg class="r" style="left:38.00px;top:5.80px;" width="9.6" height="7.6" viewBox="0 0 9.6 7.6"><path d="M1.2 2.8H5.6C7.8 2.8 8.6 4 8.6 5.2C8.6 6.4 7.6 7.2 6.2 7.2" fill="none" stroke="#fff" stroke-width="1.3"/><path d="M0 2.8L3.2 0V5.6Z" fill="#fff"/></svg><svg class="r" style="left:52.38px;top:8.32px;" width="3.23" height="1.95" viewBox="0 0 3.23 1.95"><path d="M0 0H3.23L1.61 1.95Z" fill="#fff"/></svg><svg class="r" style="left:64.60px;top:5.80px;" width="9.6" height="7.6" viewBox="0 0 9.6 7.6"><path d="M8.4 2.8H4C1.8 2.8 1 4 1 5.2C1 6.4 2 7.2 3.4 7.2" fill="none" stroke="#4f9370" stroke-width="1.2"/><path d="M9.6 2.8L6.4 0V5.6Z" fill="#4f9370"/></svg><svg class="r" style="left:78.69px;top:8.32px;" width="3.23" height="1.95" viewBox="0 0 3.23 1.95"><path d="M0 0H3.23L1.61 1.95Z" fill="#4f9370"/></svg><span class="t" style="left:93.50px;top:3.78px;font-size:3.6px;line-height:4.32px;color:#e6f0ea;font-weight:bold;">ABC</span><svg class="r" style="left:93.60px;top:8.00px;" width="8.6" height="6.4" viewBox="0 0 8.6 6.4"><path d="M.8 3L3.2 5.4L7.8 .8" fill="none" stroke="#fff" stroke-width="1.5"/></svg><div class="r" style="left:124.30px;top:7.70px;width:2.40px;height:0.70px;background:#cfe3d8;"></div><svg class="r" style="left:124.51px;top:9.20px;" width="1.98" height="1.2" viewBox="0 0 1.98 1.2"><path d="M0 0H1.98L0.99 1.20Z" fill="#cfe3d8"/></svg><div class="r" style="left:38.00px;top:20.40px;width:33.60px;height:15.00px;background:#f1f1f1;"></div><span class="t" style="left:12.25px;top:24.76px;font-size:7.4px;line-height:8.88px;color:#fff;letter-spacing:-0.106px;">File</span><span class="t" style="left:44.45px;top:24.76px;font-size:7.4px;line-height:8.88px;color:#217346;letter-spacing:0.140px;">Home</span><span class="t" style="left:78.80px;top:24.76px;font-size:7.4px;line-height:8.88px;color:#fff;letter-spacing:-0.085px;">Insert</span><span class="t" style="left:111.20px;top:24.76px;font-size:7.4px;line-height:8.88px;color:#fff;letter-spacing:-0.178px;">Page Layout</span><span class="t" style="left:165.10px;top:24.76px;font-size:7.4px;line-height:8.88px;color:#fff;letter-spacing:-0.130px;">Formulas</span><span class="t" style="left:209.10px;top:24.76px;font-size:7.4px;line-height:8.88px;color:#fff;letter-spacing:-0.108px;">Data</span><span class="t" style="left:238.70px;top:24.76px;font-size:7.4px;line-height:8.88px;color:#fff;letter-spacing:-0.111px;">Review</span><span class="t" style="left:277.25px;top:24.76px;font-size:7.4px;line-height:8.88px;color:#fff;letter-spacing:-0.102px;">View</span><svg class="r" style="left:7.00px;top:38.40px;" width="18" height="19.4" viewBox="0 0 18 19.4"><rect x=".4" y="2.6" width="13.2" height="14.6" rx=".8" fill="#ecc57f"/><path d="M4 3.4V2.2H5.6C5.6 .4 8.4 .4 8.4 2.2H10V3.4Z" fill="#6a6a6a"/><path d="M9.6 9.6H14.4L16.8 12V18.9H9.6Z" fill="#fff" stroke="#8a8a8a" stroke-width=".7"/><path d="M14.4 9.6V12H16.8" fill="none" stroke="#8a8a8a" stroke-width=".7"/></svg><span class="t" style="left:5.70px;top:60.86px;font-size:7.4px;line-height:8.88px;color:#444;letter-spacing:-0.385px;">Paste</span><svg class="r" style="left:12.49px;top:72.37px;" width="3.42" height="2.07" viewBox="0 0 3.42 2.07"><path d="M0 0H3.42L1.71 2.07Z" fill="#666"/></svg><svg class="r" style="left:29.00px;top:39.40px;" width="7.6" height="8.6" viewBox="0 0 7.6 8.6"><path d="M1.6 .3L5.2 5.6M6 .3L2.4 5.6" stroke="#555" stroke-width=".8" fill="none"/><circle cx="1.7" cy="6.8" r="1.3" fill="none" stroke="#3b78c4" stroke-width=".8"/><circle cx="5.9" cy="6.8" r="1.3" fill="none" stroke="#3b78c4" stroke-width=".8"/></svg><span class="t" style="left:39.60px;top:40.06px;font-size:7.4px;line-height:8.88px;color:#444;letter-spacing:-0.305px;">Cut</span><svg class="r" style="left:29.00px;top:52.60px;" width="8.4" height="9.4" viewBox="0 0 8.4 9.4"><path d="M.4 .4H3.8L5.2 1.8V6.4H.4Z" fill="#fff" stroke="#777" stroke-width=".7"/><path d="M3.2 2.8H6.6L8 4.2V9H3.2Z" fill="#fff" stroke="#777" stroke-width=".7"/><path d="M4.2 5.4H7M4.2 6.8H7" stroke="#6ea0dc" stroke-width=".6"/></svg><span class="t" style="left:39.60px;top:53.76px;font-size:7.4px;line-height:8.88px;color:#444;letter-spacing:-0.069px;">Copy</span><svg class="r" style="left:61.08px;top:56.78px;" width="3.04" height="1.84" viewBox="0 0 3.04 1.84"><path d="M0 0H3.04L1.52 1.84Z" fill="#777"/></svg><svg class="r" style="left:29.00px;top:67.00px;" width="9" height="8.6" viewBox="0 0 9 8.6"><path d="M.3 5.2L3.6 2.6L5.8 5L3 8.3Z" fill="#eab85e"/><path d="M4.2 2.2L6.6 .4L8.6 2.6L6.4 4.6Z" fill="#555"/></svg><span class="t" style="left:39.60px;top:68.06px;font-size:7.4px;line-height:8.88px;color:#444;letter-spacing:-0.139px;">Format Painter</span><span class="t" style="left:27.00px;top:81.57px;font-size:6.8px;line-height:8.16px;color:#666;letter-spacing:-0.056px;">Clipboard</span><svg class="r" style="left:85.60px;top:83.60px;" width="3.6" height="3.6" viewBox="0 0 3.6 3.6"><path d="M.4 3.6V.4H3.6" fill="none" stroke="#777" stroke-width="0.6"/><path d="M3.6 3.6H1.62L3.6 1.62Z" fill="#777"/><path d="M1.08 1.08L2.8800000000000003 2.8800000000000003" stroke="#777" stroke-width="0.6"/></svg><div class="r" style="left:92.00px;top:38.00px;width:0.80px;height:50.00px;background:#dcdcdc;"></div><div class="r" style="left:95.20px;top:42.80px;width:55.00px;height:12.00px;background:#fff;box-sizing:border-box;border:1px solid #d6d6d6;"></div><div class="r" style="left:150.80px;top:42.80px;width:29.60px;height:12.00px;background:#fff;box-sizing:border-box;border:1px solid #d6d6d6;"></div><span class="t" style="left:96.80px;top:45.06px;font-size:7.4px;line-height:8.88px;color:#444;letter-spacing:-0.041px;">Arial</span><svg class="r" style="left:145.28px;top:47.92px;" width="3.23" height="1.95" viewBox="0 0 3.23 1.95"><path d="M0 0H3.23L1.61 1.95Z" fill="#666"/></svg><span class="t" style="left:153.60px;top:45.06px;font-size:7.4px;line-height:8.88px;color:#444;letter-spacing:-0.241px;">11</span><svg class="r" style="left:174.78px;top:47.92px;" width="3.23" height="1.95" viewBox="0 0 3.23 1.95"><path d="M0 0H3.23L1.61 1.95Z" fill="#666"/></svg><span class="t" style="left:185.20px;top:44.76px;font-size:8.4px;line-height:10.08px;color:#444;">A</span><svg class="r" style="left:190.40px;top:43.60px;" width="2.4" height="1.8" viewBox="0 0 2.4 1.8"><path d="M0 1.8H2.4L1.2 0Z" fill="#3b78c4"/></svg><span class="t" style="left:197.33px;top:45.66px;font-size:7.4px;line-height:8.88px;color:#444;">A</span><svg class="r" style="left:201.60px;top:44.00px;" width="2.4" height="1.8" viewBox="0 0 2.4 1.8"><path d="M0 0H2.4L1.2 1.8Z" fill="#3b78c4"/></svg><span class="t" style="left:97.87px;top:61.76px;font-size:8.4px;line-height:10.08px;color:#444;font-weight:bold;">B</span><span class="t" style="left:112.68px;top:61.56px;font-size:8.8px;line-height:10.56px;color:#444;font-style:italic;font-family:'Liberation Serif',serif;font-weight:bold;">I</span><span class="t" style="left:123.54px;top:61.66px;font-size:8.2px;line-height:9.84px;color:#444;text-decoration:underline;text-underline-offset:.6px;">U</span><svg class="r" style="left:134.68px;top:65.48px;" width="3.04" height="1.84" viewBox="0 0 3.04 1.84"><path d="M0 0H3.04L1.52 1.84Z" fill="#666"/></svg><div class="r" style="left:141.20px;top:60.60px;width:0.80px;height:11.40px;background:#dcdcdc;"></div><svg class="r" style="left:146.00px;top:62.00px;" width="8.8" height="8.8" viewBox="0 0 8.8 8.8"><path d="M.4 .4H8.4V8.4H.4ZM4.4 .4V8.4M.4 4.4H8.4" fill="none" stroke="#b2b2b2" stroke-width=".8"/></svg><svg class="r" style="left:158.48px;top:65.48px;" width="3.04" height="1.84" viewBox="0 0 3.04 1.84"><path d="M0 0H3.04L1.52 1.84Z" fill="#666"/></svg><div class="r" style="left:165.00px;top:60.60px;width:0.80px;height:11.40px;background:#dcdcdc;"></div><svg class="r" style="left:169.00px;top:60.60px;" width="10.6" height="11" viewBox="0 0 10.6 11"><path d="M2.2 4.4L5 1.2L8 4.6L5 7.6Z" fill="#fff" stroke="#666" stroke-width=".8"/><path d="M4.2 .6V3" stroke="#666" stroke-width=".7"/><path d="M8.6 5.2C9.4 6.4 9.8 7 9 7.6C8.2 7 8 6.2 8.6 5.2Z" fill="#3b78c4"/><rect x="0" y="8.8" width="10.2" height="2.2" fill="#ffee00"/></svg><svg class="r" style="left:182.18px;top:65.48px;" width="3.04" height="1.84" viewBox="0 0 3.04 1.84"><path d="M0 0H3.04L1.52 1.84Z" fill="#666"/></svg><span class="t" style="left:190.83px;top:60.06px;font-size:8.6px;line-height:10.32px;color:#333;">A</span><div class="r" style="left:188.60px;top:69.40px;width:10.20px;height:2.20px;background:#ee1111;"></div><svg class="r" style="left:201.48px;top:65.48px;" width="3.04" height="1.84" viewBox="0 0 3.04 1.84"><path d="M0 0H3.04L1.52 1.84Z" fill="#666"/></svg><span class="t" style="left:140.00px;top:81.57px;font-size:6.8px;line-height:8.16px;color:#666;letter-spacing:-0.402px;">Font</span><svg class="r" style="left:201.80px;top:83.60px;" width="3.6" height="3.6" viewBox="0 0 3.6 3.6"><path d="M.4 3.6V.4H3.6" fill="none" stroke="#777" stroke-width="0.6"/><path d="M3.6 3.6H1.62L3.6 1.62Z" fill="#777"/><path d="M1.08 1.08L2.8800000000000003 2.8800000000000003" stroke="#777" stroke-width="0.6"/></svg><div class="r" style="left:208.40px;top:38.00px;width:0.80px;height:50.00px;background:#dcdcdc;"></div><div class="r" style="left:236.30px;top:42.20px;width:13.10px;height:12.60px;background:#c9c9c9;"></div><svg class="r" style="left:212.00px;top:41.00px;" width="80" height="16" viewBox="0 0 80 16"><path d="M1.10 2.70h8.6 M2.30 4.60h6.2 M1.10 6.50h8.6" stroke="#858585" stroke-width="0.75" fill="none"/><path d="M14.10 5.90h8.6 M15.30 7.80h6.2 M14.10 9.70h8.6" stroke="#858585" stroke-width="0.75" fill="none"/><path d="M27.10 8.50h8.6 M28.30 10.40h6.2 M27.10 12.30h8.6" stroke="#777" stroke-width="0.75" fill="none"/><path d="M44.2 11.4L51.6 4.4" stroke="#555" stroke-width=".9" fill="none"/><path d="M49.4 4H52V6.6" stroke="#555" stroke-width=".8" fill="none"/><path d="M44.6 5.4C45.4 4.2 46.8 5 46 6.2C45.6 7 44.6 7.2 44.4 6.6M47 3.4V6.6M47 5C47.6 4 49 4.4 48.6 5.6C48.2 6.6 47.4 6.6 47 6" stroke="#666" stroke-width=".6" fill="none"/><rect x="72.4" y="2" width="7" height="9" fill="#fff" stroke="#8a97aa" stroke-width=".6"/><path d="M73.4 4H78.4M73.4 6.2H78.4M73.4 8.4H76.4" stroke="#6f94cc" stroke-width=".7"/></svg><svg class="r" style="left:267.08px;top:47.68px;" width="3.04" height="1.84" viewBox="0 0 3.04 1.84"><path d="M0 0H3.04L1.52 1.84Z" fill="#666"/></svg><div class="r" style="left:251.20px;top:42.00px;width:0.80px;height:12.60px;background:#dcdcdc;"></div><div class="r" style="left:251.20px;top:60.40px;width:0.80px;height:12.60px;background:#dcdcdc;"></div><div class="r" style="left:281.40px;top:42.00px;width:0.80px;height:12.60px;background:#dcdcdc;"></div><div class="r" style="left:281.40px;top:60.40px;width:0.80px;height:12.60px;background:#dcdcdc;"></div><svg class="r" style="left:212.00px;top:60.00px;" width="80" height="14" viewBox="0 0 80 14"><path d="M1.30 3.75h7.8 M1.30 5.65h5.4 M1.30 7.55h7.8 M1.30 9.45h5.4" stroke="#858585" stroke-width="0.75" fill="none"/><path d="M14.30 3.75h7.8 M15.70 5.65h5 M14.30 7.55h7.8 M15.70 9.45h5" stroke="#858585" stroke-width="0.75" fill="none"/><path d="M27.30 3.75h7.8 M29.70 5.65h5.4 M27.30 7.55h7.8 M29.70 9.45h5.4" stroke="#858585" stroke-width="0.75" fill="none"/><path d="M43.80 2.9h9.2M43.80 10.3h9.2M48.40 4.7h4.6M48.40 6.6h4.6M48.40 8.5h4.6" stroke="#858585" stroke-width=".7" fill="none"/><path d="M47.20 6.6H44.20M45.80 4.7L43.90 6.6L45.80 8.5" stroke="#2b6fc2" stroke-width="1.2" fill="none"/><path d="M56.60 2.9h9.2M56.60 10.3h9.2M61.20 4.7h4.6M61.20 6.6h4.6M61.20 8.5h4.6" stroke="#858585" stroke-width=".7" fill="none"/><path d="M56.60 6.6H59.80M58.20 4.7L60.10 6.6L58.20 8.5" stroke="#2b6fc2" stroke-width="1.2" fill="none"/><rect x="72.4" y="1.8" width="7" height="9.6" fill="#fff" stroke="#888" stroke-width=".6"/><path d="M72.4 4.2H79.4M72.4 9H79.4" stroke="#999" stroke-width=".5"/><path d="M73.6 6.6H78.4M74.8 5.6L73.6 6.6L74.8 7.6" stroke="#2b6fc2" stroke-width=".8" fill="none"/></svg><span class="t" style="left:265.80px;top:81.17px;font-size:6.8px;line-height:8.16px;color:#666;letter-spacing:-0.027px;">Alignment</span><div class="r" style="left:3.00px;top:96.80px;width:62.30px;height:14.00px;background:#fff;"></div><span class="t" style="left:6.20px;top:99.21px;font-size:8.5px;line-height:10.2px;color:#444;letter-spacing:-0.099px;">A2</span><svg class="r" style="left:57.89px;top:102.97px;" width="3.42" height="2.07" viewBox="0 0 3.42 2.07"><path d="M0 0H3.42L1.71 2.07Z" fill="#777"/></svg><div class="r" style="left:74.40px;top:100.60px;width:0.90px;height:0.90px;background:#9a9a9a;"></div><div class="r" style="left:74.40px;top:102.90px;width:0.90px;height:0.90px;background:#9a9a9a;"></div><div class="r" style="left:74.40px;top:105.20px;width:0.90px;height:0.90px;background:#9a9a9a;"></div><div class="r" style="left:84.40px;top:96.80px;width:66.60px;height:14.00px;background:#fff;"></div><svg class="r" style="left:91.50px;top:100.30px;" width="7.4" height="7.4" viewBox="0 0 7.4 7.4"><path d="M.6 .6L6.8 6.8M6.8 .6L.6 6.8" stroke="#b4b4b4" stroke-width=".9" fill="none"/></svg><svg class="r" style="left:113.50px;top:100.30px;" width="8.4" height="7.4" viewBox="0 0 8.4 7.4"><path d="M.6 4.2L3 6.6L7.8 .8" stroke="#b4b4b4" stroke-width=".9" fill="none"/></svg><span class="t" style="left:135.40px;top:98.15px;font-size:10px;line-height:12.0px;color:#4a4a4a;font-style:italic;font-family:'Liberation Serif',serif;">f</span><span class="t" style="left:138.80px;top:101.26px;font-size:7.2px;line-height:8.64px;color:#4a4a4a;font-style:italic;font-family:'Liberation Serif',serif;">x</span><div class="r" style="left:153.50px;top:96.80px;width:138.50px;height:14.00px;background:#fff;"></div><span class="t" style="left:159.60px;top:99.21px;font-size:8.5px;line-height:10.2px;color:#444;letter-spacing:-0.215px;">HD-001</span><div class="r" style="left:0.00px;top:116.80px;width:292.00px;height:11.80px;background:#e6e6e6;"></div><div class="r" style="left:16.70px;top:116.80px;width:62.80px;height:11.80px;background:#d2d2d2;"></div><div class="r" style="left:16.70px;top:127.70px;width:63.10px;height:1.20px;background:#217346;"></div><svg class="r" style="left:6.60px;top:119.30px;" width="8.6" height="8.2" viewBox="0 0 8.6 8.2"><path d="M8.6 0V8.2H0Z" fill="#b8b8b8"/></svg><span class="t" style="left:45.23px;top:117.96px;font-size:8.6px;line-height:10.32px;color:#217346;-webkit-text-stroke:0;">A</span><span class="t" style="left:96.28px;top:117.96px;font-size:8.6px;line-height:10.32px;color:#444;-webkit-text-stroke:0;">B</span><div class="r" style="left:79.10px;top:117.40px;width:0.80px;height:11.20px;background:#c9c9c9;"></div><span class="t" style="left:135.39px;top:117.96px;font-size:8.6px;line-height:10.32px;color:#444;-webkit-text-stroke:0;">C</span><div class="r" style="left:118.40px;top:117.40px;width:0.80px;height:11.20px;background:#c9c9c9;"></div><span class="t" style="left:174.79px;top:117.96px;font-size:8.6px;line-height:10.32px;color:#444;-webkit-text-stroke:0;">D</span><div class="r" style="left:157.80px;top:117.40px;width:0.80px;height:11.20px;background:#c9c9c9;"></div><span class="t" style="left:214.38px;top:117.96px;font-size:8.6px;line-height:10.32px;color:#444;-webkit-text-stroke:0;">E</span><div class="r" style="left:197.20px;top:117.40px;width:0.80px;height:11.20px;background:#c9c9c9;"></div><span class="t" style="left:253.97px;top:117.96px;font-size:8.6px;line-height:10.32px;color:#444;-webkit-text-stroke:0;">F</span><div class="r" style="left:236.50px;top:117.40px;width:0.80px;height:11.20px;background:#c9c9c9;"></div><span class="t" style="left:292.61px;top:117.96px;font-size:8.6px;line-height:10.32px;color:#444;-webkit-text-stroke:0;">G</span><div class="r" style="left:275.90px;top:117.40px;width:0.80px;height:11.20px;background:#c9c9c9;"></div><div class="r" style="left:0.00px;top:128.60px;width:16.70px;height:351.70px;background:#e6e6e6;"></div><div class="r" style="left:0.00px;top:140.45px;width:16.70px;height:154.05px;background:#d2d2d2;"></div><div class="r" style="left:16.20px;top:140.45px;width:0.50px;height:154.05px;background:#217346;"></div><div class="r" style="left:16.70px;top:152.30px;width:62.80px;height:142.20px;background:#c8c8c8;"></div><svg class="r" style="left:0;top:0" width="292" height="482" viewBox="0 0 292 482"><line x1="16.7" x2="292" y1="128.60" y2="128.60" stroke="#dfdfdf" stroke-width=".8"/><line x1="0" x2="16.7" y1="128.60" y2="128.60" stroke="#cdcdcd" stroke-width=".8"/><line x1="16.7" x2="292" y1="140.45" y2="140.45" stroke="#dfdfdf" stroke-width=".8"/><line x1="0" x2="16.7" y1="140.45" y2="140.45" stroke="#cdcdcd" stroke-width=".8"/><line x1="16.7" x2="292" y1="152.30" y2="152.30" stroke="#dfdfdf" stroke-width=".8"/><line x1="0" x2="16.7" y1="152.30" y2="152.30" stroke="#cdcdcd" stroke-width=".8"/><line x1="16.7" x2="292" y1="164.15" y2="164.15" stroke="#dfdfdf" stroke-width=".8"/><line x1="0" x2="16.7" y1="164.15" y2="164.15" stroke="#cdcdcd" stroke-width=".8"/><line x1="16.7" x2="292" y1="176.00" y2="176.00" stroke="#dfdfdf" stroke-width=".8"/><line x1="0" x2="16.7" y1="176.00" y2="176.00" stroke="#cdcdcd" stroke-width=".8"/><line x1="16.7" x2="292" y1="187.85" y2="187.85" stroke="#dfdfdf" stroke-width=".8"/><line x1="0" x2="16.7" y1="187.85" y2="187.85" stroke="#cdcdcd" stroke-width=".8"/><line x1="16.7" x2="292" y1="199.70" y2="199.70" stroke="#dfdfdf" stroke-width=".8"/><line x1="0" x2="16.7" y1="199.70" y2="199.70" stroke="#cdcdcd" stroke-width=".8"/><line x1="16.7" x2="292" y1="211.55" y2="211.55" stroke="#dfdfdf" stroke-width=".8"/><line x1="0" x2="16.7" y1="211.55" y2="211.55" stroke="#cdcdcd" stroke-width=".8"/><line x1="16.7" x2="292" y1="223.40" y2="223.40" stroke="#dfdfdf" stroke-width=".8"/><line x1="0" x2="16.7" y1="223.40" y2="223.40" stroke="#cdcdcd" stroke-width=".8"/><line x1="16.7" x2="292" y1="235.25" y2="235.25" stroke="#dfdfdf" stroke-width=".8"/><line x1="0" x2="16.7" y1="235.25" y2="235.25" stroke="#cdcdcd" stroke-width=".8"/><line x1="16.7" x2="292" y1="247.10" y2="247.10" stroke="#dfdfdf" stroke-width=".8"/><line x1="0" x2="16.7" y1="247.10" y2="247.10" stroke="#cdcdcd" stroke-width=".8"/><line x1="16.7" x2="292" y1="258.95" y2="258.95" stroke="#dfdfdf" stroke-width=".8"/><line x1="0" x2="16.7" y1="258.95" y2="258.95" stroke="#cdcdcd" stroke-width=".8"/><line x1="16.7" x2="292" y1="270.80" y2="270.80" stroke="#dfdfdf" stroke-width=".8"/><line x1="0" x2="16.7" y1="270.80" y2="270.80" stroke="#cdcdcd" stroke-width=".8"/><line x1="16.7" x2="292" y1="282.65" y2="282.65" stroke="#dfdfdf" stroke-width=".8"/><line x1="0" x2="16.7" y1="282.65" y2="282.65" stroke="#cdcdcd" stroke-width=".8"/><line x1="16.7" x2="292" y1="294.50" y2="294.50" stroke="#dfdfdf" stroke-width=".8"/><line x1="0" x2="16.7" y1="294.50" y2="294.50" stroke="#cdcdcd" stroke-width=".8"/><line x1="16.7" x2="292" y1="306.35" y2="306.35" stroke="#dfdfdf" stroke-width=".8"/><line x1="0" x2="16.7" y1="306.35" y2="306.35" stroke="#cdcdcd" stroke-width=".8"/><line x1="16.7" x2="292" y1="318.20" y2="318.20" stroke="#dfdfdf" stroke-width=".8"/><line x1="0" x2="16.7" y1="318.20" y2="318.20" stroke="#cdcdcd" stroke-width=".8"/><line x1="16.7" x2="292" y1="330.05" y2="330.05" stroke="#dfdfdf" stroke-width=".8"/><line x1="0" x2="16.7" y1="330.05" y2="330.05" stroke="#cdcdcd" stroke-width=".8"/><line x1="16.7" x2="292" y1="341.90" y2="341.90" stroke="#dfdfdf" stroke-width=".8"/><line x1="0" x2="16.7" y1="341.90" y2="341.90" stroke="#cdcdcd" stroke-width=".8"/><line x1="16.7" x2="292" y1="353.75" y2="353.75" stroke="#dfdfdf" stroke-width=".8"/><line x1="0" x2="16.7" y1="353.75" y2="353.75" stroke="#cdcdcd" stroke-width=".8"/><line x1="16.7" x2="292" y1="365.60" y2="365.60" stroke="#dfdfdf" stroke-width=".8"/><line x1="0" x2="16.7" y1="365.60" y2="365.60" stroke="#cdcdcd" stroke-width=".8"/><line x1="16.7" x2="292" y1="377.45" y2="377.45" stroke="#dfdfdf" stroke-width=".8"/><line x1="0" x2="16.7" y1="377.45" y2="377.45" stroke="#cdcdcd" stroke-width=".8"/><line x1="16.7" x2="292" y1="389.30" y2="389.30" stroke="#dfdfdf" stroke-width=".8"/><line x1="0" x2="16.7" y1="389.30" y2="389.30" stroke="#cdcdcd" stroke-width=".8"/><line x1="16.7" x2="292" y1="401.15" y2="401.15" stroke="#dfdfdf" stroke-width=".8"/><line x1="0" x2="16.7" y1="401.15" y2="401.15" stroke="#cdcdcd" stroke-width=".8"/><line x1="16.7" x2="292" y1="413.00" y2="413.00" stroke="#dfdfdf" stroke-width=".8"/><line x1="0" x2="16.7" y1="413.00" y2="413.00" stroke="#cdcdcd" stroke-width=".8"/><line x1="16.7" x2="292" y1="424.85" y2="424.85" stroke="#dfdfdf" stroke-width=".8"/><line x1="0" x2="16.7" y1="424.85" y2="424.85" stroke="#cdcdcd" stroke-width=".8"/><line x1="16.7" x2="292" y1="436.70" y2="436.70" stroke="#dfdfdf" stroke-width=".8"/><line x1="0" x2="16.7" y1="436.70" y2="436.70" stroke="#cdcdcd" stroke-width=".8"/><line x1="16.7" x2="292" y1="448.55" y2="448.55" stroke="#dfdfdf" stroke-width=".8"/><line x1="0" x2="16.7" y1="448.55" y2="448.55" stroke="#cdcdcd" stroke-width=".8"/><line x1="16.7" x2="292" y1="460.40" y2="460.40" stroke="#dfdfdf" stroke-width=".8"/><line x1="0" x2="16.7" y1="460.40" y2="460.40" stroke="#cdcdcd" stroke-width=".8"/><line x1="16.7" x2="292" y1="472.25" y2="472.25" stroke="#dfdfdf" stroke-width=".8"/><line x1="0" x2="16.7" y1="472.25" y2="472.25" stroke="#cdcdcd" stroke-width=".8"/><line x1="16.7" x2="292" y1="484.10" y2="484.10" stroke="#dfdfdf" stroke-width=".8"/><line x1="0" x2="16.7" y1="484.10" y2="484.10" stroke="#cdcdcd" stroke-width=".8"/><line x1="16.7" x2="79.5" y1="164.15" y2="164.15" stroke="#b9b9b9" stroke-width=".8"/><line x1="16.7" x2="79.5" y1="176.00" y2="176.00" stroke="#b9b9b9" stroke-width=".8"/><line x1="16.7" x2="79.5" y1="187.85" y2="187.85" stroke="#b9b9b9" stroke-width=".8"/><line x1="16.7" x2="79.5" y1="199.70" y2="199.70" stroke="#b9b9b9" stroke-width=".8"/><line x1="16.7" x2="79.5" y1="211.55" y2="211.55" stroke="#b9b9b9" stroke-width=".8"/><line x1="16.7" x2="79.5" y1="223.40" y2="223.40" stroke="#b9b9b9" stroke-width=".8"/><line x1="16.7" x2="79.5" y1="235.25" y2="235.25" stroke="#b9b9b9" stroke-width=".8"/><line x1="16.7" x2="79.5" y1="247.10" y2="247.10" stroke="#b9b9b9" stroke-width=".8"/><line x1="16.7" x2="79.5" y1="258.95" y2="258.95" stroke="#b9b9b9" stroke-width=".8"/><line x1="16.7" x2="79.5" y1="270.80" y2="270.80" stroke="#b9b9b9" stroke-width=".8"/><line x1="16.7" x2="79.5" y1="282.65" y2="282.65" stroke="#b9b9b9" stroke-width=".8"/><line x1="79.5" x2="79.5" y1="128.6" y2="480.3" stroke="#dfdfdf" stroke-width=".8"/><line x1="118.8" x2="118.8" y1="128.6" y2="480.3" stroke="#dfdfdf" stroke-width=".8"/><line x1="158.2" x2="158.2" y1="128.6" y2="480.3" stroke="#dfdfdf" stroke-width=".8"/><line x1="197.6" x2="197.6" y1="128.6" y2="480.3" stroke="#dfdfdf" stroke-width=".8"/><line x1="236.9" x2="236.9" y1="128.6" y2="480.3" stroke="#dfdfdf" stroke-width=".8"/><line x1="276.3" x2="276.3" y1="128.6" y2="480.3" stroke="#dfdfdf" stroke-width=".8"/><line x1="315.6" x2="315.6" y1="128.6" y2="480.3" stroke="#dfdfdf" stroke-width=".8"/><line x1="16.7" x2="16.7" y1="128.6" y2="480.3" stroke="#bcbcbc" stroke-width=".9"/><rect x="16.9" y="140.35" width="62.60" height="154.15" fill="none" stroke="#217346" stroke-width="1.15"/><rect x="78.2" y="293.20" width="2.6" height="2.6" fill="#217346" stroke="#fff" stroke-width=".3"/></svg><span class="t" style="left:5.85px;top:129.78px;font-size:8.8px;line-height:10.56px;color:#333;-webkit-text-stroke:.15px #333;">1</span><span class="t" style="left:5.85px;top:141.63px;font-size:8.8px;line-height:10.56px;color:#217346;-webkit-text-stroke:0;">2</span><span class="t" style="left:5.85px;top:153.48px;font-size:8.8px;line-height:10.56px;color:#217346;-webkit-text-stroke:0;">3</span><span class="t" style="left:5.85px;top:165.33px;font-size:8.8px;line-height:10.56px;color:#217346;-webkit-text-stroke:0;">4</span><span class="t" style="left:5.85px;top:177.18px;font-size:8.8px;line-height:10.56px;color:#217346;-webkit-text-stroke:0;">5</span><span class="t" style="left:5.85px;top:189.03px;font-size:8.8px;line-height:10.56px;color:#217346;-webkit-text-stroke:0;">6</span><span class="t" style="left:5.85px;top:200.88px;font-size:8.8px;line-height:10.56px;color:#217346;-webkit-text-stroke:0;">7</span><span class="t" style="left:5.85px;top:212.73px;font-size:8.8px;line-height:10.56px;color:#217346;-webkit-text-stroke:0;">8</span><span class="t" style="left:5.85px;top:224.58px;font-size:8.8px;line-height:10.56px;color:#217346;-webkit-text-stroke:0;">9</span><span class="t" style="left:4.30px;top:236.43px;font-size:8.8px;line-height:10.56px;color:#217346;letter-spacing:-0.894px;-webkit-text-stroke:0;">10</span><span class="t" style="left:4.30px;top:248.28px;font-size:8.8px;line-height:10.56px;color:#217346;letter-spacing:-0.568px;-webkit-text-stroke:0;">11</span><span class="t" style="left:4.30px;top:260.13px;font-size:8.8px;line-height:10.56px;color:#217346;letter-spacing:-0.894px;-webkit-text-stroke:0;">12</span><span class="t" style="left:4.30px;top:271.98px;font-size:8.8px;line-height:10.56px;color:#217346;letter-spacing:-0.894px;-webkit-text-stroke:0;">13</span><span class="t" style="left:4.30px;top:283.83px;font-size:8.8px;line-height:10.56px;color:#217346;letter-spacing:-0.894px;-webkit-text-stroke:0;">14</span><span class="t" style="left:4.30px;top:295.68px;font-size:8.8px;line-height:10.56px;color:#333;letter-spacing:-0.894px;-webkit-text-stroke:.15px #333;">15</span><span class="t" style="left:4.30px;top:307.53px;font-size:8.8px;line-height:10.56px;color:#333;letter-spacing:-0.894px;-webkit-text-stroke:.15px #333;">16</span><span class="t" style="left:4.30px;top:319.38px;font-size:8.8px;line-height:10.56px;color:#333;letter-spacing:-0.894px;-webkit-text-stroke:.15px #333;">17</span><span class="t" style="left:4.30px;top:331.23px;font-size:8.8px;line-height:10.56px;color:#333;letter-spacing:-0.894px;-webkit-text-stroke:.15px #333;">18</span><span class="t" style="left:4.30px;top:343.08px;font-size:8.8px;line-height:10.56px;color:#333;letter-spacing:-0.894px;-webkit-text-stroke:.15px #333;">19</span><span class="t" style="left:4.30px;top:354.93px;font-size:8.8px;line-height:10.56px;color:#333;letter-spacing:-0.894px;-webkit-text-stroke:.15px #333;">20</span><span class="t" style="left:4.30px;top:366.78px;font-size:8.8px;line-height:10.56px;color:#333;letter-spacing:-0.894px;-webkit-text-stroke:.15px #333;">21</span><span class="t" style="left:4.30px;top:378.63px;font-size:8.8px;line-height:10.56px;color:#333;letter-spacing:-0.894px;-webkit-text-stroke:.15px #333;">22</span><span class="t" style="left:4.30px;top:390.48px;font-size:8.8px;line-height:10.56px;color:#333;letter-spacing:-0.894px;-webkit-text-stroke:.15px #333;">23</span><span class="t" style="left:4.30px;top:402.33px;font-size:8.8px;line-height:10.56px;color:#333;letter-spacing:-0.894px;-webkit-text-stroke:.15px #333;">24</span><span class="t" style="left:4.30px;top:414.18px;font-size:8.8px;line-height:10.56px;color:#333;letter-spacing:-0.894px;-webkit-text-stroke:.15px #333;">25</span><span class="t" style="left:4.30px;top:426.03px;font-size:8.8px;line-height:10.56px;color:#333;letter-spacing:-0.894px;-webkit-text-stroke:.15px #333;">26</span><span class="t" style="left:4.30px;top:437.88px;font-size:8.8px;line-height:10.56px;color:#333;letter-spacing:-0.894px;-webkit-text-stroke:.15px #333;">27</span><span class="t" style="left:4.30px;top:449.73px;font-size:8.8px;line-height:10.56px;color:#333;letter-spacing:-0.894px;-webkit-text-stroke:.15px #333;">28</span><span class="t" style="left:4.30px;top:461.58px;font-size:8.8px;line-height:10.56px;color:#333;letter-spacing:-0.894px;-webkit-text-stroke:.15px #333;">29</span><span class="t" style="left:4.30px;top:473.43px;font-size:8.8px;line-height:10.56px;color:#333;letter-spacing:-0.894px;-webkit-text-stroke:.15px #333;">30</span><span class="t" style="left:18.30px;top:130.78px;font-size:8.2px;line-height:9.84px;color:#222;letter-spacing:0.094px;">Mã số</span><span class="t" style="left:18.10px;top:141.68px;font-size:8.5px;line-height:10.2px;color:#1a1a1a;letter-spacing:0.202px;-webkit-text-stroke:.25px #1a1a1a;">HD-001</span><span class="t" style="left:18.10px;top:153.53px;font-size:8.5px;line-height:10.2px;color:#1a1a1a;letter-spacing:0.202px;-webkit-text-stroke:.25px #1a1a1a;">HD-002</span><span class="t" style="left:18.10px;top:165.38px;font-size:8.5px;line-height:10.2px;color:#1a1a1a;letter-spacing:0.202px;-webkit-text-stroke:.25px #1a1a1a;">HD-003</span><span class="t" style="left:18.10px;top:177.23px;font-size:8.5px;line-height:10.2px;color:#1a1a1a;letter-spacing:0.202px;-webkit-text-stroke:.25px #1a1a1a;">HD-004</span><span class="t" style="left:18.10px;top:189.08px;font-size:8.5px;line-height:10.2px;color:#1a1a1a;letter-spacing:0.202px;-webkit-text-stroke:.25px #1a1a1a;">HD-005</span><span class="t" style="left:18.10px;top:200.93px;font-size:8.5px;line-height:10.2px;color:#1a1a1a;letter-spacing:0.202px;-webkit-text-stroke:.25px #1a1a1a;">HD-006</span><span class="t" style="left:18.10px;top:212.78px;font-size:8.5px;line-height:10.2px;color:#1a1a1a;letter-spacing:0.202px;-webkit-text-stroke:.25px #1a1a1a;">HD-007</span><span class="t" style="left:18.10px;top:224.63px;font-size:8.5px;line-height:10.2px;color:#1a1a1a;letter-spacing:0.202px;-webkit-text-stroke:.25px #1a1a1a;">HD-008</span><span class="t" style="left:18.10px;top:236.48px;font-size:8.5px;line-height:10.2px;color:#1a1a1a;letter-spacing:0.202px;-webkit-text-stroke:.25px #1a1a1a;">HD-009</span><span class="t" style="left:18.10px;top:248.33px;font-size:8.5px;line-height:10.2px;color:#1a1a1a;letter-spacing:0.202px;-webkit-text-stroke:.25px #1a1a1a;">HD-010</span><span class="t" style="left:18.10px;top:260.18px;font-size:8.5px;line-height:10.2px;color:#1a1a1a;letter-spacing:0.307px;-webkit-text-stroke:.25px #1a1a1a;">HD-011</span><span class="t" style="left:18.10px;top:272.03px;font-size:8.5px;line-height:10.2px;color:#1a1a1a;letter-spacing:0.202px;-webkit-text-stroke:.25px #1a1a1a;">HD-012</span><span class="t" style="left:18.10px;top:283.88px;font-size:8.5px;line-height:10.2px;color:#1a1a1a;letter-spacing:0.202px;-webkit-text-stroke:.25px #1a1a1a;">HD-013</span><svg class="r" style="left:80.00px;top:295.10px;" width="13" height="12.2" viewBox="0 0 13 12.2"><rect x=".4" y=".4" width="12.2" height="11.4" rx=".9" fill="#fdfdfd" stroke="#cdcdcd" stroke-width=".7"/><rect x="2.2" y="2.2" width="3.6" height="2.4" fill="#3868d8"/><rect x="6.3" y="2.3" width="2.9" height="2.2" fill="#fff" stroke="#b5b5b5" stroke-width=".5"/><rect x="2.2" y="5" width="3.6" height="2.1" fill="#c9dcf8"/><rect x="2.4" y="7.7" width="3.2" height="1.8" fill="#fff" stroke="#c4c4c4" stroke-width=".4"/><path d="M6.8 8.6H10M8.4 7V10.2" stroke="#444" stroke-width=".8"/></svg><div class="r" style="left:0.00px;top:480.30px;width:292.00px;height:15.20px;background:#e6e6e6;"></div><div class="r" style="left:0.00px;top:480.00px;width:292.00px;height:0.80px;background:#c9c9c9;"></div><div class="r" style="left:0.00px;top:495.20px;width:292.00px;height:1.30px;background:#cfcfcf;"></div><div class="r" style="left:51.00px;top:480.30px;width:38.80px;height:13.40px;background:#fff;"></div><div class="r" style="left:51.00px;top:493.30px;width:38.80px;height:1.10px;background:#2f7e54;"></div><span class="t" style="left:56.90px;top:482.36px;font-size:8px;line-height:9.6px;color:#217346;letter-spacing:0.094px;font-weight:bold;-webkit-text-stroke:0;">Sheet1</span><svg class="r" style="left:13.60px;top:485.70px;" width="3.2" height="4.6" viewBox="0 0 3.2 4.6"><path d="M2.8 .3L.5 2.3L2.8 4.3" fill="none" stroke="#c2c2c2" stroke-width=".9"/></svg><svg class="r" style="left:27.60px;top:485.70px;" width="3.2" height="4.6" viewBox="0 0 3.2 4.6"><path d="M.4 .3L2.7 2.3L.4 4.3" fill="none" stroke="#c2c2c2" stroke-width=".9"/></svg><svg class="r" style="left:105.80px;top:482.80px;" width="10.6" height="10.6" viewBox="0 0 10.6 10.6"><circle cx="5.3" cy="5.3" r="4.6" fill="none" stroke="#777" stroke-width=".9"/><path d="M2.9 5.3H7.7M5.3 2.9V7.7" stroke="#777" stroke-width=".9"/></svg><div class="r" style="left:0.00px;top:496.50px;width:292.00px;height:12.00px;background:#f1f1f1;"></div><span class="t" style="left:3.60px;top:497.97px;font-size:6.6px;line-height:7.92px;color:#555;letter-spacing:-0.336px;">Ready</span><div class="r" style="left:0.00px;top:508.30px;width:292.00px;height:25.00px;background:#f1e9e2;"></div><div class="r" style="left:30.00px;top:509.00px;width:211.60px;height:24.00px;background:#fff;"></div><svg class="r" style="left:9.80px;top:515.40px;" width="10.4" height="10.4" viewBox="0 0 10.4 10.4"><path d="M0 1.5L4.2 .9V4.9H0ZM4.9 .8L10.4 0V4.9H4.9ZM0 5.6H4.2V9.6L0 9ZM4.9 5.6H10.4V10.4L4.9 9.7Z" fill="#111"/></svg><svg class="r" style="left:37.00px;top:515.60px;" width="11" height="11" viewBox="0 0 11 11"><circle cx="6.8" cy="4.1" r="3.3" fill="none" stroke="#333" stroke-width="1"/><path d="M4.5 6.5L.6 10.4" stroke="#333" stroke-width="1.1"/></svg><span class="t" style="left:54.60px;top:516.25px;font-size:9px;line-height:10.8px;color:#3a3a3a;letter-spacing:0.050px;">Type here to search</span><svg class="r" style="left:251.20px;top:516.00px;" width="12" height="10.2" viewBox="0 0 12 10.2"><path d="M.2 1H8.4M.2 9H8.4" stroke="#444" stroke-width="1.2"/><path d="M1.6 1V9M6.9 1V9" stroke="#444" stroke-width="1"/><path d="M10.3 .4V9.8" stroke="#555" stroke-width=".9"/><rect x="9.6" y="4" width="1.5" height="1.5" fill="#222"/></svg><svg class="r" style="left:280.40px;top:514.00px;" width="14" height="14" viewBox="0 0 14 14"><defs><linearGradient id="cg" x1="0" y1="0" x2=".35" y2="1"><stop offset="0" stop-color="#1b7fe6"/><stop offset=".32" stop-color="#22a6d8"/><stop offset=".52" stop-color="#46bf62"/><stop offset=".7" stop-color="#f0c62e"/><stop offset=".88" stop-color="#f5632c"/><stop offset="1" stop-color="#ee3b2b"/></linearGradient></defs><path d="M3.2 .4H10.5V4.4C9 6.5 8.6 9.6 9.8 13.2H7.2C5.6 12.8 4.6 11.4 3.4 10.8L.6 9.2C.4 5.8 1.2 2.4 3.2 .4Z" fill="url(#cg)"/></svg></div>
<div class="p" style="left:519px;width:281px"><div class="r" style="left:0.00px;top:0.00px;width:281.00px;height:45.80px;background:#217346;"></div><div class="r" style="left:57.00px;top:0.00px;width:38.00px;height:1.20px;background:#1e74c0;"></div><div class="r" style="left:95.00px;top:0.00px;width:157.00px;height:1.20px;background:#e8ece9;"></div><span class="t" style="left:125.20px;top:7.58px;font-size:9.4px;line-height:11.28px;color:#fff;letter-spacing:0.016px;">Book1 - Excel</span><span class="t" style="left:-0.60px;top:31.08px;font-size:9.4px;line-height:11.28px;color:#a6c9b4;letter-spacing:0.200px;-webkit-text-stroke:0;">t you want to do...</span><div class="r" style="left:0.00px;top:45.60px;width:281.00px;height:72.20px;background:#f1f1f1;"></div><div class="r" style="left:0.00px;top:117.60px;width:281.00px;height:10.40px;background:#e6e6e6;"></div><div class="r" style="left:0.00px;top:127.90px;width:281.00px;height:17.80px;background:#fff;"></div><div class="r" style="left:0.00px;top:145.60px;width:281.00px;height:23.20px;background:#e6e6e6;"></div><div class="r" style="left:0.00px;top:145.30px;width:281.00px;height:0.80px;background:#d0d0d0;"></div><div class="r" style="left:6.20px;top:48.00px;width:0.90px;height:67.00px;background:#d8d8d8;"></div><div class="r" style="left:111.20px;top:48.00px;width:0.90px;height:67.00px;background:#d8d8d8;"></div><div class="r" style="left:9.60px;top:55.40px;width:98.80px;height:17.00px;background:#fff;box-sizing:border-box;border:1px solid #d0d0d0;"></div><span class="t" style="left:12.00px;top:58.38px;font-size:9.4px;line-height:11.28px;color:#444;letter-spacing:-0.149px;">General</span><svg class="r" style="left:101.21px;top:63.33px;" width="4.18" height="2.53" viewBox="0 0 4.18 2.53"><path d="M0 0H4.18L2.09 2.53Z" fill="#555"/></svg><span class="t" style="left:13.73px;top:80.15px;font-size:13.2px;line-height:15.84px;color:#444;">$</span><svg class="r" style="left:28.61px;top:86.79px;" width="3.99" height="2.42" viewBox="0 0 3.99 2.42"><path d="M0 0H3.99L1.99 2.42Z" fill="#555"/></svg><span class="t" style="left:37.87px;top:81.12px;font-size:12px;line-height:14.4px;color:#444;">%</span><span class="t" style="left:57.72px;top:74.60px;font-size:15px;line-height:18.0px;color:#444;font-weight:bold;">,</span><div class="r" style="left:71.30px;top:81.00px;width:0.90px;height:14.00px;background:#d8d8d8;"></div><span class="t" style="left:83.66px;top:81.02px;font-size:5.6px;line-height:6.72px;color:#444;">.0</span><span class="t" style="left:80.71px;top:87.02px;font-size:5.6px;line-height:6.72px;color:#444;">.00</span><svg class="r" style="left:77.80px;top:82.60px;" width="4.6" height="4" viewBox="0 0 4.6 4"><path d="M0 2L2.2 0V1.2H4.6V2.8H2.2V4Z" fill="#2b6fc2"/></svg><span class="t" style="left:97.71px;top:81.02px;font-size:5.6px;line-height:6.72px;color:#444;">.00</span><span class="t" style="left:101.06px;top:87.02px;font-size:5.6px;line-height:6.72px;color:#444;">.0</span><svg class="r" style="left:96.40px;top:88.60px;" width="4.6" height="4" viewBox="0 0 4.6 4"><path d="M4.6 2L2.4 0V1.2H0V2.8H2.4V4Z" fill="#2b6fc2"/></svg><span class="t" style="left:37.00px;top:106.57px;font-size:8.8px;line-height:10.56px;color:#666;letter-spacing:-0.050px;">Number</span><svg class="r" style="left:102.55px;top:110.75px;" width="4.5" height="4.5" viewBox="0 0 4.5 4.5"><path d="M.4 4.5V.4H4.5" fill="none" stroke="#777" stroke-width="0.75"/><path d="M4.5 4.5H2.025L4.5 2.025Z" fill="#777"/><path d="M1.3499999999999999 1.3499999999999999L3.6 3.6" stroke="#777" stroke-width="0.75"/></svg><svg class="r" style="left:-1.25px;top:110.75px;" width="4.5" height="4.5" viewBox="0 0 4.5 4.5"><path d="M.4 4.5V.4H4.5" fill="none" stroke="#777" stroke-width="0.75"/><path d="M4.5 4.5H2.025L4.5 2.025Z" fill="#777"/><path d="M1.3499999999999999 1.3499999999999999L3.6 3.6" stroke="#777" stroke-width="0.75"/></svg><svg class="r" style="left:132.20px;top:53.80px;" width="24.4" height="22.2" viewBox="0 0 24.4 22.2"><rect x=".4" y=".4" width="21.6" height="18.2" fill="#fff" stroke="#a8a8a8" stroke-width=".7"/><path d="M.4 4.9H22M.4 9.5H22M.4 14.1H22M7 .4V18.6M14.6 .4V18.6" stroke="#b8b8b8" stroke-width=".6"/><rect x="7.2" y=".8" width="4.6" height="3.8" fill="#de6a42"/><rect x="7.2" y="5.3" width="7.6" height="3.9" fill="#3b78c4"/><rect x="7.2" y="9.9" width="5.4" height="3.9" fill="#de6a42"/><rect x="7.2" y="14.5" width="3" height="3.8" fill="#3b78c4"/><rect x="11.8" y="12.8" width="12" height="8.8" fill="#fff" stroke="#6a6a6a" stroke-width=".8"/><text x="17.9" y="20.6" font-family="Liberation Sans, sans-serif" font-size="10.5" fill="#333" text-anchor="middle">≠</text></svg><span class="t" style="left:117.40px;top:78.58px;font-size:9.4px;line-height:11.28px;color:#444;letter-spacing:0.342px;">Conditional</span><span class="t" style="left:115.50px;top:90.98px;font-size:9.4px;line-height:11.28px;color:#444;letter-spacing:0.327px;">Formatting</span><svg class="r" style="left:165.80px;top:96.39px;" width="3.99" height="2.42" viewBox="0 0 3.99 2.42"><path d="M0 0H3.99L1.99 2.42Z" fill="#555"/></svg><svg class="r" style="left:183.40px;top:53.00px;" width="26" height="24" viewBox="0 0 26 24"><rect x=".4" y=".4" width="21.4" height="19" fill="#fff" stroke="#a0a0a0" stroke-width=".7"/><rect x="6" y="5" width="15.8" height="14.4" fill="#bdd4f0"/><path d="M.4 5H21.8M.4 9.8H21.8M.4 14.6H21.8M6 .4V19.4M11.2 .4V19.4M16.4 .4V19.4" stroke="#b0b0b0" stroke-width=".6"/><path d="M16.8 15L23.6 6.2L25.8 7.8L19.4 16.8Z" fill="#6e6e6e"/><path d="M6.8 23.4C9.2 22.6 10.4 18.4 14.4 16.4C16.8 15.4 19.4 17.6 18.4 20C16.6 23.8 10.6 24 6.8 23.4Z" fill="#3b78c4"/><path d="M14.2 18.6C15 17.8 16.4 18 16.6 19" stroke="#fff" stroke-width=".9" fill="none"/></svg><span class="t" style="left:173.20px;top:78.58px;font-size:9.4px;line-height:11.28px;color:#444;letter-spacing:0.054px;">Format as</span><span class="t" style="left:180.20px;top:90.98px;font-size:9.4px;line-height:11.28px;color:#444;letter-spacing:0.105px;">Table</span><svg class="r" style="left:204.71px;top:96.39px;" width="3.99" height="2.42" viewBox="0 0 3.99 2.42"><path d="M0 0H3.99L1.99 2.42Z" fill="#555"/></svg><div class="r" style="left:218.20px;top:50.00px;width:281.00px;height:49.80px;background:#fff;box-sizing:border-box;border:1px solid #d2d2d2;"></div><svg class="r" style="left:219.00px;top:53.00px;" width="70" height="22" viewBox="0 0 70 22"><rect x="1" y="1.4" width="80" height="19" fill="#fff" stroke="#c2c2c2" stroke-width="1.2"/></svg><span class="t" style="left:224.20px;top:58.32px;font-size:10.6px;line-height:12.72px;color:#111;letter-spacing:0.373px;">Normal</span><div class="r" style="left:220.60px;top:76.80px;width:281.00px;height:17.80px;background:#ffeb9c;"></div><span class="t" style="left:224.40px;top:79.22px;font-size:10.6px;line-height:12.72px;color:#9c6500;letter-spacing:0.261px;">Neutral</span><svg class="r" style="left:93.00px;top:76.00px;" width="92" height="30" viewBox="0 0 92 30"><rect x="2.2" y="2.4" width="85.9" height="24.9" fill="none" stroke="#ee1c25" stroke-width="2.2"/></svg><svg class="r" style="left:0;top:0" width="281" height="533" viewBox="0 0 281 533"><line x1="0" x2="281" y1="168.80" y2="168.80" stroke="#dadada" stroke-width=".9"/><line x1="0" x2="281" y1="184.46" y2="184.46" stroke="#dadada" stroke-width=".9"/><line x1="0" x2="281" y1="200.12" y2="200.12" stroke="#dadada" stroke-width=".9"/><line x1="0" x2="281" y1="215.78" y2="215.78" stroke="#dadada" stroke-width=".9"/><line x1="0" x2="281" y1="231.44" y2="231.44" stroke="#dadada" stroke-width=".9"/><line x1="0" x2="281" y1="247.10" y2="247.10" stroke="#dadada" stroke-width=".9"/><line x1="0" x2="281" y1="262.76" y2="262.76" stroke="#dadada" stroke-width=".9"/><line x1="0" x2="281" y1="278.42" y2="278.42" stroke="#dadada" stroke-width=".9"/><line x1="0" x2="281" y1="294.08" y2="294.08" stroke="#dadada" stroke-width=".9"/><line x1="0" x2="281" y1="309.74" y2="309.74" stroke="#dadada" stroke-width=".9"/><line x1="0" x2="281" y1="325.40" y2="325.40" stroke="#dadada" stroke-width=".9"/><line x1="0" x2="281" y1="341.06" y2="341.06" stroke="#dadada" stroke-width=".9"/><line x1="0" x2="281" y1="356.72" y2="356.72" stroke="#dadada" stroke-width=".9"/><line x1="0" x2="281" y1="372.38" y2="372.38" stroke="#dadada" stroke-width=".9"/><line x1="0" x2="281" y1="388.04" y2="388.04" stroke="#dadada" stroke-width=".9"/><line x1="0" x2="281" y1="403.70" y2="403.70" stroke="#dadada" stroke-width=".9"/><line x1="0" x2="281" y1="419.36" y2="419.36" stroke="#dadada" stroke-width=".9"/><line x1="0" x2="281" y1="435.02" y2="435.02" stroke="#dadada" stroke-width=".9"/><line x1="0" x2="281" y1="450.68" y2="450.68" stroke="#dadada" stroke-width=".9"/><line x1="0" x2="281" y1="466.34" y2="466.34" stroke="#dadada" stroke-width=".9"/><line x1="0" x2="281" y1="482.00" y2="482.00" stroke="#dadada" stroke-width=".9"/><line x1="0" x2="281" y1="497.66" y2="497.66" stroke="#dadada" stroke-width=".9"/><line x1="0" x2="281" y1="513.32" y2="513.32" stroke="#dadada" stroke-width=".9"/><line x1="0" x2="281" y1="528.98" y2="528.98" stroke="#dadada" stroke-width=".9"/><line x1="0" x2="281" y1="544.64" y2="544.64" stroke="#dadada" stroke-width=".9"/><line x1="50.20" x2="50.20" y1="168.8" y2="533" stroke="#dadada" stroke-width=".9"/><line x1="50.20" x2="50.20" y1="154.5" y2="168.8" stroke="#c8c8c8" stroke-width=".9"/><line x1="103.30" x2="103.30" y1="168.8" y2="533" stroke="#dadada" stroke-width=".9"/><line x1="103.30" x2="103.30" y1="154.5" y2="168.8" stroke="#c8c8c8" stroke-width=".9"/><line x1="155.20" x2="155.20" y1="168.8" y2="533" stroke="#dadada" stroke-width=".9"/><line x1="155.20" x2="155.20" y1="154.5" y2="168.8" stroke="#c8c8c8" stroke-width=".9"/><line x1="207.30" x2="207.30" y1="168.8" y2="533" stroke="#dadada" stroke-width=".9"/><line x1="207.30" x2="207.30" y1="154.5" y2="168.8" stroke="#c8c8c8" stroke-width=".9"/><line x1="259.70" x2="259.70" y1="168.8" y2="533" stroke="#dadada" stroke-width=".9"/><line x1="259.70" x2="259.70" y1="154.5" y2="168.8" stroke="#c8c8c8" stroke-width=".9"/><line x1="0" x2="281" y1="168.8" y2="168.8" stroke="#c4c4c4" stroke-width=".9"/></svg><span class="t" style="left:22.98px;top:157.47px;font-size:10.2px;line-height:12.24px;color:#444;">I</span><span class="t" style="left:74.65px;top:157.47px;font-size:10.2px;line-height:12.24px;color:#444;">J</span><span class="t" style="left:125.60px;top:157.47px;font-size:10.2px;line-height:12.24px;color:#444;">K</span><span class="t" style="left:178.56px;top:157.47px;font-size:10.2px;line-height:12.24px;color:#444;">L</span><span class="t" style="left:229.15px;top:157.47px;font-size:10.2px;line-height:12.24px;color:#444;">M</span><span class="t" style="left:52.90px;top:172.30px;font-size:10.2px;line-height:12.24px;color:#222;letter-spacing:0.285px;">Mã số</span><span class="t" style="left:52.90px;top:186.27px;font-size:11.6px;line-height:13.92px;color:#1c1c1c;letter-spacing:-0.012px;-webkit-text-stroke:.32px #1c1c1c;">HD-001</span><span class="t" style="left:52.90px;top:201.93px;font-size:11.6px;line-height:13.92px;color:#1c1c1c;letter-spacing:-0.012px;-webkit-text-stroke:.32px #1c1c1c;">HD-002</span><span class="t" style="left:52.90px;top:217.59px;font-size:11.6px;line-height:13.92px;color:#1c1c1c;letter-spacing:-0.012px;-webkit-text-stroke:.32px #1c1c1c;">HD-003</span><span class="t" style="left:52.90px;top:233.25px;font-size:11.6px;line-height:13.92px;color:#1c1c1c;letter-spacing:-0.012px;-webkit-text-stroke:.32px #1c1c1c;">HD-004</span><span class="t" style="left:52.90px;top:248.91px;font-size:11.6px;line-height:13.92px;color:#1c1c1c;letter-spacing:-0.012px;-webkit-text-stroke:.32px #1c1c1c;">HD-005</span><span class="t" style="left:52.90px;top:264.57px;font-size:11.6px;line-height:13.92px;color:#1c1c1c;letter-spacing:-0.012px;-webkit-text-stroke:.32px #1c1c1c;">HD-006</span><span class="t" style="left:52.90px;top:280.23px;font-size:11.6px;line-height:13.92px;color:#1c1c1c;letter-spacing:-0.012px;-webkit-text-stroke:.32px #1c1c1c;">HD-007</span><span class="t" style="left:52.90px;top:295.89px;font-size:11.6px;line-height:13.92px;color:#1c1c1c;letter-spacing:-0.012px;-webkit-text-stroke:.32px #1c1c1c;">HD-008</span><span class="t" style="left:52.90px;top:311.55px;font-size:11.6px;line-height:13.92px;color:#1c1c1c;letter-spacing:-0.012px;-webkit-text-stroke:.32px #1c1c1c;">HD-009</span><span class="t" style="left:52.90px;top:327.21px;font-size:11.6px;line-height:13.92px;color:#1c1c1c;letter-spacing:-0.012px;-webkit-text-stroke:.32px #1c1c1c;">HD-010</span><span class="t" style="left:52.90px;top:342.87px;font-size:11.6px;line-height:13.92px;color:#1c1c1c;letter-spacing:0.131px;-webkit-text-stroke:.32px #1c1c1c;">HD-011</span><span class="t" style="left:52.90px;top:358.53px;font-size:11.6px;line-height:13.92px;color:#1c1c1c;letter-spacing:-0.012px;-webkit-text-stroke:.32px #1c1c1c;">HD-012</span><span class="t" style="left:52.90px;top:374.19px;font-size:11.6px;line-height:13.92px;color:#1c1c1c;letter-spacing:-0.012px;-webkit-text-stroke:.32px #1c1c1c;">HD-013</span><div class="r" style="left:105.20px;top:391.00px;width:48.40px;height:16.40px;background:#fcfcfc;box-sizing:border-box;border:.8px solid #c8c8c8;"></div><svg class="r" style="left:108.20px;top:392.80px;" width="12.6" height="13.4" viewBox="0 0 12.6 13.4"><rect x=".4" y="2" width="10" height="10.8" rx=".8" fill="#f3e3a6" stroke="#b9ad82" stroke-width=".6"/><path d="M3 2.6V1.6H4.2C4.2 .2 6.6 .2 6.6 1.6H7.8V2.6Z" fill="#777"/><path d="M5 6.4H12.2V13H5Z" fill="#fff" stroke="#777" stroke-width=".7"/><path d="M6.4 10.8H10.8M6.4 9H8.4" stroke="#999" stroke-width=".6"/></svg><span class="t" style="left:122.80px;top:393.90px;font-size:8.6px;line-height:10.32px;color:#444;letter-spacing:0.183px;">(Ctrl)</span><svg class="r" style="left:146.21px;top:398.39px;" width="3.99" height="2.42" viewBox="0 0 3.99 2.42"><path d="M0 0H3.99L1.99 2.42Z" fill="#444"/></svg></div>
<div class="r" style="left:518.6px;top:0;width:.7px;height:46px;background:rgba(235,255,235,.2)"></div><div class="r" style="left:518.6px;top:46px;width:.7px;height:434px;background:rgba(246,250,232,.6)"></div>
</body></html>
